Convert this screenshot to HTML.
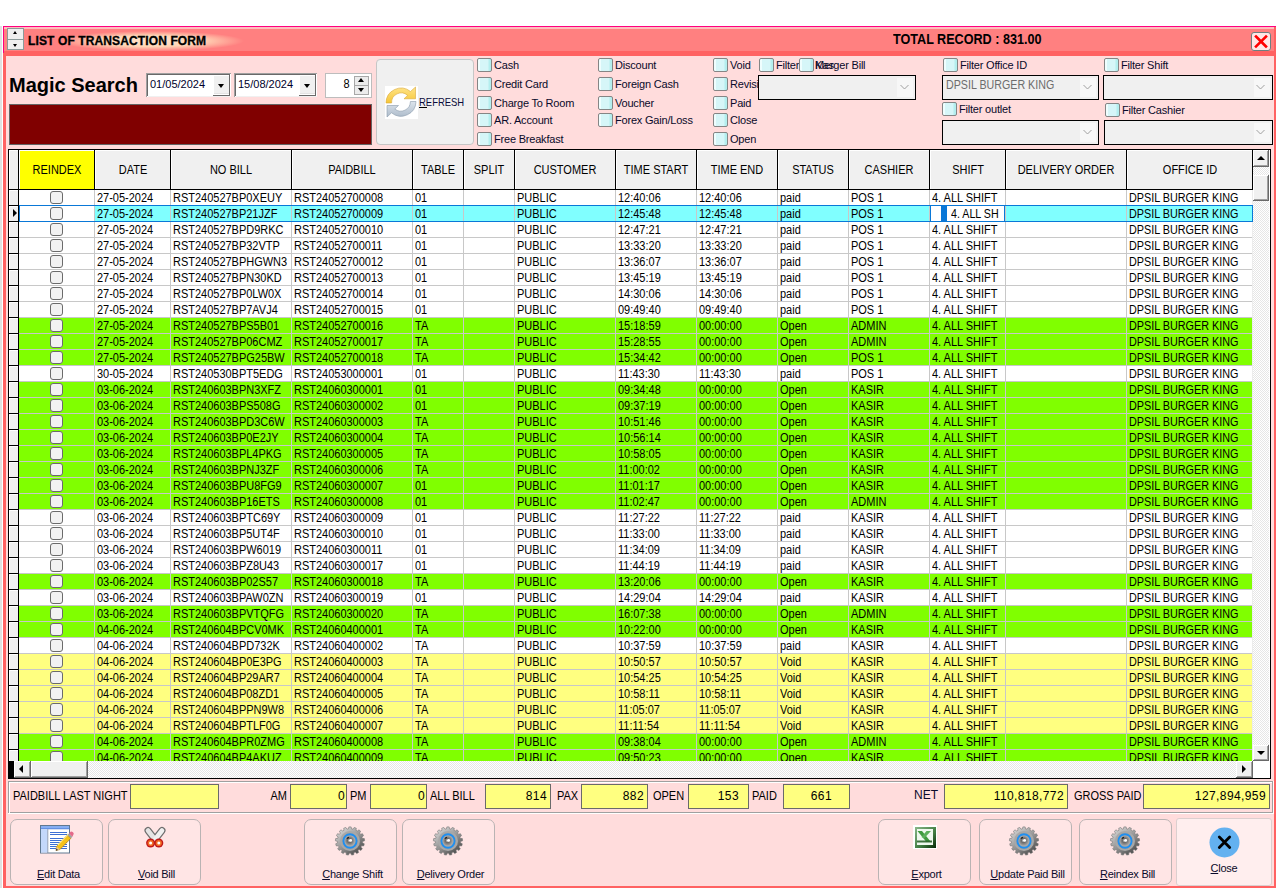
<!DOCTYPE html><html><head><meta charset="utf-8"><style>
html,body{margin:0;padding:0}
body{width:1279px;height:888px;position:relative;overflow:hidden;background:#fff;font-family:"Liberation Sans",sans-serif;color:#000}
.a{position:absolute}
.t{white-space:nowrap}
.g{white-space:nowrap;transform-origin:0 0}
.cb{position:absolute;width:13px;height:12px;border:1px solid #858585;border-radius:2px;background:linear-gradient(90deg,#effefe 0,#effefe 1.5px,#d6f6f8 2px,#d6f6f8 10px,#b4eeee 11px,#b4eeee 100%);box-sizing:content-box}
.fld{position:absolute;background:#ffff80;border:1px solid #6a6a6a;box-sizing:border-box}
.btn{position:absolute;top:819px;height:66px;width:93px;border:1px solid #b9b3b3;border-radius:7px;background:#ffe5e5;box-sizing:border-box}
.cmb{position:absolute;background:#f0f0f0;border:1px solid #000;box-sizing:border-box}
.cmb i{position:absolute;right:2px;top:2px;bottom:2px;width:16px;background:#f7f7f7}
.lbl{color:#0a0a2a}
</style></head><body>

<div class="a" style="left:0px;top:26px;width:2px;height:862px;background:#e1e1e1"></div>
<div class="a" style="left:3px;top:26px;width:1273px;height:862px;background:#ff6262"></div>
<div class="a" style="left:3px;top:26px;width:1273px;height:1px;background:#ff0080"></div>
<div class="a" style="left:3px;top:26px;width:1px;height:27px;background:#ff0080"></div>
<div class="a" style="left:4px;top:27px;width:1270px;height:24px;background:#ff8080"></div>
<div class="a" style="left:4px;top:27px;width:1270px;height:2px;background:#ffbcbc"></div>
<div class="a" style="left:6px;top:56px;width:1268px;height:830px;background:#ffdcdc"></div>
<div class="a" style="left:58px;top:31px;width:186px;height:20px;background:radial-gradient(closest-side,#ffe4cc 0%,#ffd6b6 55%,rgba(255,128,128,0) 100%)"></div>
<div class="a" style="left:7px;top:28px;width:17px;height:22px;background:#8c9a9a"></div>
<div class="a" style="left:8px;top:29px;width:15px;height:10px;background:#efefef"></div>
<div class="a" style="left:8px;top:40px;width:15px;height:9px;background:#efefef"></div>
<div class="a" style="left:13px;top:31px;width:0;height:0;border-left:2px solid transparent;border-right:2px solid transparent;border-bottom:3px solid #000"></div>
<div class="a" style="left:13px;top:44px;width:0;height:0;border-left:2px solid transparent;border-right:2px solid transparent;border-top:3px solid #000"></div>
<div class="a t" style="left:28px;top:34.84px;font-size:12px;line-height:12px;font-weight:bold;letter-spacing:0.12px;-webkit-text-stroke:0.3px #000">LIST OF TRANSACTION FORM</div>
<div class="a t" style="left:892.5px;top:32.15px;font-size:14px;line-height:14px;font-weight:bold;transform:scaleX(0.9);transform-origin:0 0">TOTAL RECORD : 831.00</div>
<div class="a" style="left:1251px;top:32px;width:20px;height:19px;box-sizing:border-box;border:1px solid #6f7f7f;border-radius:3px;background:#ffe6e6"></div>
<svg class="a" style="left:1251px;top:32px" width="20" height="19" viewBox="0 0 20 19"><path d="M5 4.5 L15 14.5 M15 4.5 L5 14.5" stroke="#ff0000" stroke-width="2.6" stroke-linecap="square"/></svg>
<div class="a t" style="left:9px;top:75.07px;font-size:20px;line-height:20px;font-weight:bold;letter-spacing:0px">Magic Search</div>
<div class="a" style="left:146px;top:73px;width:85px;height:24px;background:#a0a0a0"></div>
<div class="a" style="left:147px;top:74px;width:84px;height:23px;background:#fff"></div>
<div class="a" style="left:147px;top:74px;width:83px;height:1px;background:#696969"></div>
<div class="a" style="left:147px;top:74px;width:1px;height:22px;background:#696969"></div>
<div class="a" style="left:148px;top:96px;width:83px;height:1px;background:#f0f0f0"></div>
<div class="a t" style="left:150px;top:78.69px;font-size:11px;line-height:11px;color:#00002a">01/05/2024</div>
<div class="a" style="left:213px;top:75px;width:17px;height:21px;background:#696969"></div>
<div class="a" style="left:213px;top:75px;width:16px;height:20px;background:#fff"></div>
<div class="a" style="left:214px;top:76px;width:15px;height:18px;background:#f0f0f0"></div>
<div class="a" style="left:214px;top:93px;width:15px;height:1px;background:#e3e3e3"></div>
<div class="a" style="left:218px;top:84px;width:0;height:0;border-left:3.5px solid transparent;border-right:3.5px solid transparent;border-top:4px solid #000"></div>
<div class="a" style="left:234px;top:73px;width:83px;height:24px;background:#a0a0a0"></div>
<div class="a" style="left:235px;top:74px;width:82px;height:23px;background:#fff"></div>
<div class="a" style="left:235px;top:74px;width:81px;height:1px;background:#696969"></div>
<div class="a" style="left:235px;top:74px;width:1px;height:22px;background:#696969"></div>
<div class="a" style="left:236px;top:96px;width:81px;height:1px;background:#f0f0f0"></div>
<div class="a t" style="left:238px;top:78.69px;font-size:11px;line-height:11px;color:#00002a">15/08/2024</div>
<div class="a" style="left:299px;top:75px;width:17px;height:21px;background:#696969"></div>
<div class="a" style="left:299px;top:75px;width:16px;height:20px;background:#fff"></div>
<div class="a" style="left:300px;top:76px;width:15px;height:18px;background:#f0f0f0"></div>
<div class="a" style="left:300px;top:93px;width:15px;height:1px;background:#e3e3e3"></div>
<div class="a" style="left:304px;top:84px;width:0;height:0;border-left:3.5px solid transparent;border-right:3.5px solid transparent;border-top:4px solid #000"></div>
<div class="a" style="left:325px;top:73px;width:47px;height:25px;background:#bdbdbd"></div>
<div class="a" style="left:326px;top:74px;width:45px;height:23px;background:#fff"></div>
<div class="a g" style="right:929px;top:78.34px;font-size:12px;line-height:12px;transform:scaleX(0.915);transform-origin:100% 0;">8</div>
<div class="a" style="left:354px;top:76px;width:15px;height:19px;background:#a8a8a8"></div>
<div class="a" style="left:355px;top:77px;width:13px;height:8px;background:#ececec"></div>
<div class="a" style="left:355px;top:86px;width:13px;height:8px;background:#ececec"></div>
<div class="a" style="left:358px;top:78px;width:0;height:0;border-left:3px solid transparent;border-right:3px solid transparent;border-bottom:4px solid #000"></div>
<div class="a" style="left:358px;top:88px;width:0;height:0;border-left:3px solid transparent;border-right:3px solid transparent;border-top:4px solid #000"></div>
<div class="a" style="left:9px;top:104px;width:363px;height:41px;background:#646464"></div>
<div class="a" style="left:10px;top:105px;width:361px;height:39px;background:#800000"></div>
<div class="a" style="left:376px;top:59px;width:98px;height:86px;box-sizing:border-box;border:1px solid #c6c6c6;border-radius:4px;background:#f0f0f0"></div>
<div class="a" style="left:385px;top:86px;width:33px;height:33px;background:#fff"></div>
<svg class="a" style="left:385px;top:86px" width="32" height="32" viewBox="0 0 32 32">
<defs><linearGradient id="ry" x1="0" y1="0" x2="0" y2="1"><stop offset="0" stop-color="#ffe48a"/><stop offset="1" stop-color="#f6c636"/></linearGradient>
<linearGradient id="rb" x1="0" y1="0" x2="0" y2="1"><stop offset="0" stop-color="#dce4ec"/><stop offset="1" stop-color="#aebccb"/></linearGradient></defs>
<path d="M1 17 A15 15 0 0 1 25.5 5.5 L30.5 1 L30.5 12.8 L19 12.8 L22.6 9.4 A9.6 9.6 0 0 0 6.6 17 Z" fill="url(#ry)" stroke="#d9a83a" stroke-width="0.6"/>
<path d="M31 15.5 A15 15 0 0 1 6.5 26.8 L2 31 L2 19.5 L13.5 19.5 L9.8 23 A9.6 9.6 0 0 0 25.4 15.5 Z" fill="url(#rb)" stroke="#8a9aab" stroke-width="0.6"/>
</svg>
<div class="a g" style="left:418.5px;top:96.69px;font-size:11px;line-height:11px;transform:scaleX(0.86);color:#0a0a3a">REFRESH</div>
<div class="a" style="left:419px;top:107px;width:8px;height:1px;background:#000"></div>
<div class="cb" style="left:477px;top:58px"></div>
<div class="a t" style="left:494px;top:59.69px;font-size:11px;line-height:11px;color:#0a0a2a;letter-spacing:-0.2px">Cash</div>
<div class="cb" style="left:477px;top:77px"></div>
<div class="a t" style="left:494px;top:78.69px;font-size:11px;line-height:11px;color:#0a0a2a;letter-spacing:-0.2px">Credit Card</div>
<div class="cb" style="left:477px;top:96px"></div>
<div class="a t" style="left:494px;top:97.69px;font-size:11px;line-height:11px;color:#0a0a2a;letter-spacing:-0.2px">Charge To Room</div>
<div class="cb" style="left:477px;top:113px"></div>
<div class="a t" style="left:494px;top:114.69px;font-size:11px;line-height:11px;color:#0a0a2a;letter-spacing:-0.2px">AR. Account</div>
<div class="cb" style="left:477px;top:132px"></div>
<div class="a t" style="left:494px;top:133.69px;font-size:11px;line-height:11px;color:#0a0a2a;letter-spacing:-0.2px">Free Breakfast</div>
<div class="cb" style="left:598px;top:58px"></div>
<div class="a t" style="left:615px;top:59.69px;font-size:11px;line-height:11px;color:#0a0a2a;letter-spacing:-0.2px">Discount</div>
<div class="cb" style="left:598px;top:77px"></div>
<div class="a t" style="left:615px;top:78.69px;font-size:11px;line-height:11px;color:#0a0a2a;letter-spacing:-0.2px">Foreign Cash</div>
<div class="cb" style="left:598px;top:96px"></div>
<div class="a t" style="left:615px;top:97.69px;font-size:11px;line-height:11px;color:#0a0a2a;letter-spacing:-0.2px">Voucher</div>
<div class="cb" style="left:598px;top:113px"></div>
<div class="a t" style="left:615px;top:114.69px;font-size:11px;line-height:11px;color:#0a0a2a;letter-spacing:-0.2px">Forex Gain/Loss</div>
<div class="cb" style="left:713px;top:58px"></div>
<div class="a t" style="left:730px;top:59.69px;font-size:11px;line-height:11px;color:#0a0a2a;letter-spacing:-0.2px">Void</div>
<div class="cb" style="left:713px;top:77px"></div>
<div class="a t" style="left:730px;top:78.69px;font-size:11px;line-height:11px;color:#0a0a2a;letter-spacing:-0.2px;width:28px;overflow:hidden">Revisi</div>
<div class="cb" style="left:713px;top:96px"></div>
<div class="a t" style="left:730px;top:97.69px;font-size:11px;line-height:11px;color:#0a0a2a;letter-spacing:-0.2px">Paid</div>
<div class="cb" style="left:713px;top:113px"></div>
<div class="a t" style="left:730px;top:114.69px;font-size:11px;line-height:11px;color:#0a0a2a;letter-spacing:-0.2px">Close</div>
<div class="cb" style="left:713px;top:132px"></div>
<div class="a t" style="left:730px;top:133.69px;font-size:11px;line-height:11px;color:#0a0a2a;letter-spacing:-0.2px">Open</div>
<div class="cb" style="left:759px;top:58px"></div>
<div class="a t" style="left:776px;top:59.69px;font-size:11px;line-height:11px;color:#0a0a2a;letter-spacing:-0.2px">Filter</div>
<div class="a t" style="left:815px;top:59.69px;font-size:11px;line-height:11px;color:#0a0a2a">Kas</div>
<div class="cb" style="left:799px;top:58px"></div>
<div class="a t" style="left:815px;top:59.69px;font-size:11px;line-height:11px;color:#0a0a2a;letter-spacing:-0.2px">Merger Bill</div>
<div class="cmb" style="left:758px;top:75px;width:158px;height:25px"><i></i></div>
<svg class="a" style="left:900px;top:84px" width="10" height="6"><path d="M0.5 1 L4.5 5 L8.5 1" fill="none" stroke="#a0a0a0" stroke-width="1"/></svg>
<div class="cb" style="left:943px;top:58px"></div>
<div class="a t" style="left:960px;top:59.69px;font-size:11px;line-height:11px;color:#0a0a2a;letter-spacing:-0.2px">Filter Office ID</div>
<div class="cmb" style="left:942px;top:75px;width:157px;height:25px"><i></i></div>
<svg class="a" style="left:1083px;top:84px" width="10" height="6"><path d="M0.5 1 L4.5 5 L8.5 1" fill="none" stroke="#a0a0a0" stroke-width="1"/></svg>
<div class="a g" style="left:946px;top:78.84px;font-size:12px;line-height:12px;transform:scaleX(0.89);color:#6d6d6d">DPSIL BURGER KING</div>
<div class="cb" style="left:942px;top:102px"></div>
<div class="a t" style="left:959px;top:103.69px;font-size:11px;line-height:11px;color:#0a0a2a;letter-spacing:-0.2px">Filter outlet</div>
<div class="cmb" style="left:942px;top:120px;width:157px;height:25px"><i></i></div>
<svg class="a" style="left:1083px;top:129px" width="10" height="6"><path d="M0.5 1 L4.5 5 L8.5 1" fill="none" stroke="#a0a0a0" stroke-width="1"/></svg>
<div class="cb" style="left:1104px;top:58px"></div>
<div class="a t" style="left:1121px;top:59.69px;font-size:11px;line-height:11px;color:#0a0a2a;letter-spacing:-0.2px">Filter Shift</div>
<div class="cmb" style="left:1103px;top:75px;width:170px;height:25px"><i></i></div>
<svg class="a" style="left:1256px;top:84px" width="10" height="6"><path d="M0.5 1 L4.5 5 L8.5 1" fill="none" stroke="#a0a0a0" stroke-width="1"/></svg>
<div class="cb" style="left:1105px;top:103px"></div>
<div class="a t" style="left:1122px;top:104.69px;font-size:11px;line-height:11px;color:#0a0a2a;letter-spacing:-0.2px">Filter Cashier</div>
<div class="cmb" style="left:1104px;top:120px;width:169px;height:25px"><i></i></div>
<svg class="a" style="left:1256px;top:129px" width="10" height="6"><path d="M0.5 1 L4.5 5 L8.5 1" fill="none" stroke="#a0a0a0" stroke-width="1"/></svg>
<div class="a" style="left:8px;top:149px;width:1263px;height:630px;background:#000"></div>
<div class="a" style="left:9px;top:150px;width:1261px;height:628px;background:#fff"></div>
<div class="a" style="left:9px;top:150px;width:1243px;height:39px;background:#f0f0f0"></div>
<div class="a" style="left:19px;top:150px;width:75px;height:39px;background:#ffff00"></div>
<div class="a" style="left:9px;top:189px;width:1244px;height:1px;background:#000"></div>
<div class="a" style="left:18px;top:150px;width:1px;height:611px;background:#000"></div>
<div class="a" style="left:9px;top:150px;width:9px;height:1px;background:#fff"></div>
<div class="a" style="left:9px;top:150px;width:1px;height:39px;background:#fff"></div>
<div class="a" style="left:94px;top:150px;width:1px;height:39px;background:#000"></div>
<div class="a" style="left:170px;top:150px;width:1px;height:39px;background:#000"></div>
<div class="a" style="left:291px;top:150px;width:1px;height:39px;background:#000"></div>
<div class="a" style="left:412px;top:150px;width:1px;height:39px;background:#000"></div>
<div class="a" style="left:463px;top:150px;width:1px;height:39px;background:#000"></div>
<div class="a" style="left:514px;top:150px;width:1px;height:39px;background:#000"></div>
<div class="a" style="left:615px;top:150px;width:1px;height:39px;background:#000"></div>
<div class="a" style="left:696px;top:150px;width:1px;height:39px;background:#000"></div>
<div class="a" style="left:777px;top:150px;width:1px;height:39px;background:#000"></div>
<div class="a" style="left:848px;top:150px;width:1px;height:39px;background:#000"></div>
<div class="a" style="left:929px;top:150px;width:1px;height:39px;background:#000"></div>
<div class="a" style="left:1005px;top:150px;width:1px;height:39px;background:#000"></div>
<div class="a" style="left:1126px;top:150px;width:1px;height:39px;background:#000"></div>
<div class="a" style="left:1252px;top:150px;width:1px;height:39px;background:#000"></div>
<div class="a" style="left:19px;top:150px;width:75px;height:1px;background:#fff"></div>
<div class="a" style="left:19px;top:150px;width:1px;height:39px;background:#fff"></div>
<div class="a g" style="left:-143.5px;width:400px;text-align:center;top:163.84px;font-size:12px;line-height:12px;transform:scaleX(0.915);transform-origin:50% 0;">REINDEX</div>
<div class="a" style="left:95px;top:150px;width:75px;height:1px;background:#fff"></div>
<div class="a" style="left:95px;top:150px;width:1px;height:39px;background:#fff"></div>
<div class="a g" style="left:-67.5px;width:400px;text-align:center;top:163.84px;font-size:12px;line-height:12px;transform:scaleX(0.915);transform-origin:50% 0;">DATE</div>
<div class="a" style="left:171px;top:150px;width:120px;height:1px;background:#fff"></div>
<div class="a" style="left:171px;top:150px;width:1px;height:39px;background:#fff"></div>
<div class="a g" style="left:31.0px;width:400px;text-align:center;top:163.84px;font-size:12px;line-height:12px;transform:scaleX(0.915);transform-origin:50% 0;">NO BILL</div>
<div class="a" style="left:292px;top:150px;width:120px;height:1px;background:#fff"></div>
<div class="a" style="left:292px;top:150px;width:1px;height:39px;background:#fff"></div>
<div class="a g" style="left:152.0px;width:400px;text-align:center;top:163.84px;font-size:12px;line-height:12px;transform:scaleX(0.915);transform-origin:50% 0;">PAIDBILL</div>
<div class="a" style="left:413px;top:150px;width:50px;height:1px;background:#fff"></div>
<div class="a" style="left:413px;top:150px;width:1px;height:39px;background:#fff"></div>
<div class="a g" style="left:238.0px;width:400px;text-align:center;top:163.84px;font-size:12px;line-height:12px;transform:scaleX(0.915);transform-origin:50% 0;">TABLE</div>
<div class="a" style="left:464px;top:150px;width:50px;height:1px;background:#fff"></div>
<div class="a" style="left:464px;top:150px;width:1px;height:39px;background:#fff"></div>
<div class="a g" style="left:289.0px;width:400px;text-align:center;top:163.84px;font-size:12px;line-height:12px;transform:scaleX(0.915);transform-origin:50% 0;">SPLIT</div>
<div class="a" style="left:515px;top:150px;width:100px;height:1px;background:#fff"></div>
<div class="a" style="left:515px;top:150px;width:1px;height:39px;background:#fff"></div>
<div class="a g" style="left:365.0px;width:400px;text-align:center;top:163.84px;font-size:12px;line-height:12px;transform:scaleX(0.915);transform-origin:50% 0;">CUSTOMER</div>
<div class="a" style="left:616px;top:150px;width:80px;height:1px;background:#fff"></div>
<div class="a" style="left:616px;top:150px;width:1px;height:39px;background:#fff"></div>
<div class="a g" style="left:456.0px;width:400px;text-align:center;top:163.84px;font-size:12px;line-height:12px;transform:scaleX(0.915);transform-origin:50% 0;">TIME START</div>
<div class="a" style="left:697px;top:150px;width:80px;height:1px;background:#fff"></div>
<div class="a" style="left:697px;top:150px;width:1px;height:39px;background:#fff"></div>
<div class="a g" style="left:537.0px;width:400px;text-align:center;top:163.84px;font-size:12px;line-height:12px;transform:scaleX(0.915);transform-origin:50% 0;">TIME END</div>
<div class="a" style="left:778px;top:150px;width:70px;height:1px;background:#fff"></div>
<div class="a" style="left:778px;top:150px;width:1px;height:39px;background:#fff"></div>
<div class="a g" style="left:613.0px;width:400px;text-align:center;top:163.84px;font-size:12px;line-height:12px;transform:scaleX(0.915);transform-origin:50% 0;">STATUS</div>
<div class="a" style="left:849px;top:150px;width:80px;height:1px;background:#fff"></div>
<div class="a" style="left:849px;top:150px;width:1px;height:39px;background:#fff"></div>
<div class="a g" style="left:689.0px;width:400px;text-align:center;top:163.84px;font-size:12px;line-height:12px;transform:scaleX(0.915);transform-origin:50% 0;">CASHIER</div>
<div class="a" style="left:930px;top:150px;width:75px;height:1px;background:#fff"></div>
<div class="a" style="left:930px;top:150px;width:1px;height:39px;background:#fff"></div>
<div class="a g" style="left:767.5px;width:400px;text-align:center;top:163.84px;font-size:12px;line-height:12px;transform:scaleX(0.915);transform-origin:50% 0;">SHIFT</div>
<div class="a" style="left:1006px;top:150px;width:120px;height:1px;background:#fff"></div>
<div class="a" style="left:1006px;top:150px;width:1px;height:39px;background:#fff"></div>
<div class="a g" style="left:866.0px;width:400px;text-align:center;top:163.84px;font-size:12px;line-height:12px;transform:scaleX(0.915);transform-origin:50% 0;">DELIVERY ORDER</div>
<div class="a" style="left:1127px;top:150px;width:125px;height:1px;background:#fff"></div>
<div class="a" style="left:1127px;top:150px;width:1px;height:39px;background:#fff"></div>
<div class="a g" style="left:989.5px;width:400px;text-align:center;top:163.84px;font-size:12px;line-height:12px;transform:scaleX(0.915);transform-origin:50% 0;">OFFICE ID</div>
<div class="a" style="left:9px;top:190px;width:1244px;height:571px;overflow:hidden">
<div class="a" style="left:10px;top:0px;width:1234px;height:15px;background:#ffffff"></div>
<div class="a" style="left:0;top:0px;width:9px;height:15px;background:#f0f0f0;box-shadow:inset 1px 1px 0 #fff"></div>
<div class="a" style="left:0;top:15px;width:9px;height:1px;background:#000"></div>
<div class="a" style="left:10px;top:15px;width:1234px;height:1px;background:#c8c8c8"></div>
<div class="a" style="left:41px;top:1px;width:13px;height:13px;box-sizing:border-box;border:1px solid #6b6b6b;border-radius:3px;background:#f2f2f2"></div>
<div class="g" style="position:absolute;left:88px;top:1.84px;font-size:12px;line-height:12px;transform:scaleX(0.915)">27-05-2024</div>
<div class="g" style="position:absolute;left:164px;top:1.84px;font-size:12px;line-height:12px;transform:scaleX(0.915)">RST240527BP0XEUY</div>
<div class="g" style="position:absolute;left:285px;top:1.84px;font-size:12px;line-height:12px;transform:scaleX(0.915)">RST24052700008</div>
<div class="g" style="position:absolute;left:406px;top:1.84px;font-size:12px;line-height:12px;transform:scaleX(0.915)">01</div>
<div class="g" style="position:absolute;left:508px;top:1.84px;font-size:12px;line-height:12px;transform:scaleX(0.915)">PUBLIC</div>
<div class="g" style="position:absolute;left:609px;top:1.84px;font-size:12px;line-height:12px;transform:scaleX(0.915)">12:40:06</div>
<div class="g" style="position:absolute;left:690px;top:1.84px;font-size:12px;line-height:12px;transform:scaleX(0.915)">12:40:06</div>
<div class="g" style="position:absolute;left:771px;top:1.84px;font-size:12px;line-height:12px;transform:scaleX(0.915)">paid</div>
<div class="g" style="position:absolute;left:842px;top:1.84px;font-size:12px;line-height:12px;transform:scaleX(0.915)">POS 1</div>
<div class="g" style="position:absolute;left:923px;top:1.84px;font-size:12px;line-height:12px;transform:scaleX(0.915)">4. ALL SHIFT</div>
<div class="g" style="position:absolute;left:1120px;top:1.84px;font-size:12px;line-height:12px;transform:scaleX(0.9)">DPSIL BURGER KING</div>
<div class="a" style="left:10px;top:16px;width:1234px;height:15px;background:#80ffff"></div>
<div class="a" style="left:10px;top:16px;width:76px;height:15px;background:#fff"></div>
<div class="a" style="left:0;top:16px;width:9px;height:15px;background:#f0f0f0;box-shadow:inset 1px 1px 0 #fff"></div>
<div class="a" style="left:0;top:31px;width:9px;height:1px;background:#000"></div>
<div class="a" style="left:10px;top:31px;width:1234px;height:1px;background:#c8c8c8"></div>
<div class="a" style="left:41px;top:17px;width:13px;height:13px;box-sizing:border-box;border:1px solid #6b6b6b;border-radius:3px;background:#f2f2f2"></div>
<div class="g" style="position:absolute;left:88px;top:17.84px;font-size:12px;line-height:12px;transform:scaleX(0.915)">27-05-2024</div>
<div class="g" style="position:absolute;left:164px;top:17.84px;font-size:12px;line-height:12px;transform:scaleX(0.915)">RST240527BP21JZF</div>
<div class="g" style="position:absolute;left:285px;top:17.84px;font-size:12px;line-height:12px;transform:scaleX(0.915)">RST24052700009</div>
<div class="g" style="position:absolute;left:406px;top:17.84px;font-size:12px;line-height:12px;transform:scaleX(0.915)">01</div>
<div class="g" style="position:absolute;left:508px;top:17.84px;font-size:12px;line-height:12px;transform:scaleX(0.915)">PUBLIC</div>
<div class="g" style="position:absolute;left:609px;top:17.84px;font-size:12px;line-height:12px;transform:scaleX(0.915)">12:45:48</div>
<div class="g" style="position:absolute;left:690px;top:17.84px;font-size:12px;line-height:12px;transform:scaleX(0.915)">12:45:48</div>
<div class="g" style="position:absolute;left:771px;top:17.84px;font-size:12px;line-height:12px;transform:scaleX(0.915)">paid</div>
<div class="g" style="position:absolute;left:842px;top:17.84px;font-size:12px;line-height:12px;transform:scaleX(0.915)">POS 1</div>
<div class="g" style="position:absolute;left:923px;top:17.84px;font-size:12px;line-height:12px;transform:scaleX(0.915)">4. ALL SHIFT</div>
<div class="g" style="position:absolute;left:1120px;top:17.84px;font-size:12px;line-height:12px;transform:scaleX(0.9)">DPSIL BURGER KING</div>
<div class="a" style="left:10px;top:32px;width:1234px;height:15px;background:#ffffff"></div>
<div class="a" style="left:0;top:32px;width:9px;height:15px;background:#f0f0f0;box-shadow:inset 1px 1px 0 #fff"></div>
<div class="a" style="left:0;top:47px;width:9px;height:1px;background:#000"></div>
<div class="a" style="left:10px;top:47px;width:1234px;height:1px;background:#c8c8c8"></div>
<div class="a" style="left:41px;top:33px;width:13px;height:13px;box-sizing:border-box;border:1px solid #6b6b6b;border-radius:3px;background:#f2f2f2"></div>
<div class="g" style="position:absolute;left:88px;top:33.84px;font-size:12px;line-height:12px;transform:scaleX(0.915)">27-05-2024</div>
<div class="g" style="position:absolute;left:164px;top:33.84px;font-size:12px;line-height:12px;transform:scaleX(0.915)">RST240527BPD9RKC</div>
<div class="g" style="position:absolute;left:285px;top:33.84px;font-size:12px;line-height:12px;transform:scaleX(0.915)">RST24052700010</div>
<div class="g" style="position:absolute;left:406px;top:33.84px;font-size:12px;line-height:12px;transform:scaleX(0.915)">01</div>
<div class="g" style="position:absolute;left:508px;top:33.84px;font-size:12px;line-height:12px;transform:scaleX(0.915)">PUBLIC</div>
<div class="g" style="position:absolute;left:609px;top:33.84px;font-size:12px;line-height:12px;transform:scaleX(0.915)">12:47:21</div>
<div class="g" style="position:absolute;left:690px;top:33.84px;font-size:12px;line-height:12px;transform:scaleX(0.915)">12:47:21</div>
<div class="g" style="position:absolute;left:771px;top:33.84px;font-size:12px;line-height:12px;transform:scaleX(0.915)">paid</div>
<div class="g" style="position:absolute;left:842px;top:33.84px;font-size:12px;line-height:12px;transform:scaleX(0.915)">POS 1</div>
<div class="g" style="position:absolute;left:923px;top:33.84px;font-size:12px;line-height:12px;transform:scaleX(0.915)">4. ALL SHIFT</div>
<div class="g" style="position:absolute;left:1120px;top:33.84px;font-size:12px;line-height:12px;transform:scaleX(0.9)">DPSIL BURGER KING</div>
<div class="a" style="left:10px;top:48px;width:1234px;height:15px;background:#ffffff"></div>
<div class="a" style="left:0;top:48px;width:9px;height:15px;background:#f0f0f0;box-shadow:inset 1px 1px 0 #fff"></div>
<div class="a" style="left:0;top:63px;width:9px;height:1px;background:#000"></div>
<div class="a" style="left:10px;top:63px;width:1234px;height:1px;background:#c8c8c8"></div>
<div class="a" style="left:41px;top:49px;width:13px;height:13px;box-sizing:border-box;border:1px solid #6b6b6b;border-radius:3px;background:#f2f2f2"></div>
<div class="g" style="position:absolute;left:88px;top:49.84px;font-size:12px;line-height:12px;transform:scaleX(0.915)">27-05-2024</div>
<div class="g" style="position:absolute;left:164px;top:49.84px;font-size:12px;line-height:12px;transform:scaleX(0.915)">RST240527BP32VTP</div>
<div class="g" style="position:absolute;left:285px;top:49.84px;font-size:12px;line-height:12px;transform:scaleX(0.915)">RST24052700011</div>
<div class="g" style="position:absolute;left:406px;top:49.84px;font-size:12px;line-height:12px;transform:scaleX(0.915)">01</div>
<div class="g" style="position:absolute;left:508px;top:49.84px;font-size:12px;line-height:12px;transform:scaleX(0.915)">PUBLIC</div>
<div class="g" style="position:absolute;left:609px;top:49.84px;font-size:12px;line-height:12px;transform:scaleX(0.915)">13:33:20</div>
<div class="g" style="position:absolute;left:690px;top:49.84px;font-size:12px;line-height:12px;transform:scaleX(0.915)">13:33:20</div>
<div class="g" style="position:absolute;left:771px;top:49.84px;font-size:12px;line-height:12px;transform:scaleX(0.915)">paid</div>
<div class="g" style="position:absolute;left:842px;top:49.84px;font-size:12px;line-height:12px;transform:scaleX(0.915)">POS 1</div>
<div class="g" style="position:absolute;left:923px;top:49.84px;font-size:12px;line-height:12px;transform:scaleX(0.915)">4. ALL SHIFT</div>
<div class="g" style="position:absolute;left:1120px;top:49.84px;font-size:12px;line-height:12px;transform:scaleX(0.9)">DPSIL BURGER KING</div>
<div class="a" style="left:10px;top:64px;width:1234px;height:15px;background:#ffffff"></div>
<div class="a" style="left:0;top:64px;width:9px;height:15px;background:#f0f0f0;box-shadow:inset 1px 1px 0 #fff"></div>
<div class="a" style="left:0;top:79px;width:9px;height:1px;background:#000"></div>
<div class="a" style="left:10px;top:79px;width:1234px;height:1px;background:#c8c8c8"></div>
<div class="a" style="left:41px;top:65px;width:13px;height:13px;box-sizing:border-box;border:1px solid #6b6b6b;border-radius:3px;background:#f2f2f2"></div>
<div class="g" style="position:absolute;left:88px;top:65.84px;font-size:12px;line-height:12px;transform:scaleX(0.915)">27-05-2024</div>
<div class="g" style="position:absolute;left:164px;top:65.84px;font-size:12px;line-height:12px;transform:scaleX(0.915)">RST240527BPHGWN3</div>
<div class="g" style="position:absolute;left:285px;top:65.84px;font-size:12px;line-height:12px;transform:scaleX(0.915)">RST24052700012</div>
<div class="g" style="position:absolute;left:406px;top:65.84px;font-size:12px;line-height:12px;transform:scaleX(0.915)">01</div>
<div class="g" style="position:absolute;left:508px;top:65.84px;font-size:12px;line-height:12px;transform:scaleX(0.915)">PUBLIC</div>
<div class="g" style="position:absolute;left:609px;top:65.84px;font-size:12px;line-height:12px;transform:scaleX(0.915)">13:36:07</div>
<div class="g" style="position:absolute;left:690px;top:65.84px;font-size:12px;line-height:12px;transform:scaleX(0.915)">13:36:07</div>
<div class="g" style="position:absolute;left:771px;top:65.84px;font-size:12px;line-height:12px;transform:scaleX(0.915)">paid</div>
<div class="g" style="position:absolute;left:842px;top:65.84px;font-size:12px;line-height:12px;transform:scaleX(0.915)">POS 1</div>
<div class="g" style="position:absolute;left:923px;top:65.84px;font-size:12px;line-height:12px;transform:scaleX(0.915)">4. ALL SHIFT</div>
<div class="g" style="position:absolute;left:1120px;top:65.84px;font-size:12px;line-height:12px;transform:scaleX(0.9)">DPSIL BURGER KING</div>
<div class="a" style="left:10px;top:80px;width:1234px;height:15px;background:#ffffff"></div>
<div class="a" style="left:0;top:80px;width:9px;height:15px;background:#f0f0f0;box-shadow:inset 1px 1px 0 #fff"></div>
<div class="a" style="left:0;top:95px;width:9px;height:1px;background:#000"></div>
<div class="a" style="left:10px;top:95px;width:1234px;height:1px;background:#c8c8c8"></div>
<div class="a" style="left:41px;top:81px;width:13px;height:13px;box-sizing:border-box;border:1px solid #6b6b6b;border-radius:3px;background:#f2f2f2"></div>
<div class="g" style="position:absolute;left:88px;top:81.84px;font-size:12px;line-height:12px;transform:scaleX(0.915)">27-05-2024</div>
<div class="g" style="position:absolute;left:164px;top:81.84px;font-size:12px;line-height:12px;transform:scaleX(0.915)">RST240527BPN30KD</div>
<div class="g" style="position:absolute;left:285px;top:81.84px;font-size:12px;line-height:12px;transform:scaleX(0.915)">RST24052700013</div>
<div class="g" style="position:absolute;left:406px;top:81.84px;font-size:12px;line-height:12px;transform:scaleX(0.915)">01</div>
<div class="g" style="position:absolute;left:508px;top:81.84px;font-size:12px;line-height:12px;transform:scaleX(0.915)">PUBLIC</div>
<div class="g" style="position:absolute;left:609px;top:81.84px;font-size:12px;line-height:12px;transform:scaleX(0.915)">13:45:19</div>
<div class="g" style="position:absolute;left:690px;top:81.84px;font-size:12px;line-height:12px;transform:scaleX(0.915)">13:45:19</div>
<div class="g" style="position:absolute;left:771px;top:81.84px;font-size:12px;line-height:12px;transform:scaleX(0.915)">paid</div>
<div class="g" style="position:absolute;left:842px;top:81.84px;font-size:12px;line-height:12px;transform:scaleX(0.915)">POS 1</div>
<div class="g" style="position:absolute;left:923px;top:81.84px;font-size:12px;line-height:12px;transform:scaleX(0.915)">4. ALL SHIFT</div>
<div class="g" style="position:absolute;left:1120px;top:81.84px;font-size:12px;line-height:12px;transform:scaleX(0.9)">DPSIL BURGER KING</div>
<div class="a" style="left:10px;top:96px;width:1234px;height:15px;background:#ffffff"></div>
<div class="a" style="left:0;top:96px;width:9px;height:15px;background:#f0f0f0;box-shadow:inset 1px 1px 0 #fff"></div>
<div class="a" style="left:0;top:111px;width:9px;height:1px;background:#000"></div>
<div class="a" style="left:10px;top:111px;width:1234px;height:1px;background:#c8c8c8"></div>
<div class="a" style="left:41px;top:97px;width:13px;height:13px;box-sizing:border-box;border:1px solid #6b6b6b;border-radius:3px;background:#f2f2f2"></div>
<div class="g" style="position:absolute;left:88px;top:97.84px;font-size:12px;line-height:12px;transform:scaleX(0.915)">27-05-2024</div>
<div class="g" style="position:absolute;left:164px;top:97.84px;font-size:12px;line-height:12px;transform:scaleX(0.915)">RST240527BP0LW0X</div>
<div class="g" style="position:absolute;left:285px;top:97.84px;font-size:12px;line-height:12px;transform:scaleX(0.915)">RST24052700014</div>
<div class="g" style="position:absolute;left:406px;top:97.84px;font-size:12px;line-height:12px;transform:scaleX(0.915)">01</div>
<div class="g" style="position:absolute;left:508px;top:97.84px;font-size:12px;line-height:12px;transform:scaleX(0.915)">PUBLIC</div>
<div class="g" style="position:absolute;left:609px;top:97.84px;font-size:12px;line-height:12px;transform:scaleX(0.915)">14:30:06</div>
<div class="g" style="position:absolute;left:690px;top:97.84px;font-size:12px;line-height:12px;transform:scaleX(0.915)">14:30:06</div>
<div class="g" style="position:absolute;left:771px;top:97.84px;font-size:12px;line-height:12px;transform:scaleX(0.915)">paid</div>
<div class="g" style="position:absolute;left:842px;top:97.84px;font-size:12px;line-height:12px;transform:scaleX(0.915)">POS 1</div>
<div class="g" style="position:absolute;left:923px;top:97.84px;font-size:12px;line-height:12px;transform:scaleX(0.915)">4. ALL SHIFT</div>
<div class="g" style="position:absolute;left:1120px;top:97.84px;font-size:12px;line-height:12px;transform:scaleX(0.9)">DPSIL BURGER KING</div>
<div class="a" style="left:10px;top:112px;width:1234px;height:15px;background:#ffffff"></div>
<div class="a" style="left:0;top:112px;width:9px;height:15px;background:#f0f0f0;box-shadow:inset 1px 1px 0 #fff"></div>
<div class="a" style="left:0;top:127px;width:9px;height:1px;background:#000"></div>
<div class="a" style="left:10px;top:127px;width:1234px;height:1px;background:#c8c8c8"></div>
<div class="a" style="left:41px;top:113px;width:13px;height:13px;box-sizing:border-box;border:1px solid #6b6b6b;border-radius:3px;background:#f2f2f2"></div>
<div class="g" style="position:absolute;left:88px;top:113.84px;font-size:12px;line-height:12px;transform:scaleX(0.915)">27-05-2024</div>
<div class="g" style="position:absolute;left:164px;top:113.84px;font-size:12px;line-height:12px;transform:scaleX(0.915)">RST240527BP7AVJ4</div>
<div class="g" style="position:absolute;left:285px;top:113.84px;font-size:12px;line-height:12px;transform:scaleX(0.915)">RST24052700015</div>
<div class="g" style="position:absolute;left:406px;top:113.84px;font-size:12px;line-height:12px;transform:scaleX(0.915)">01</div>
<div class="g" style="position:absolute;left:508px;top:113.84px;font-size:12px;line-height:12px;transform:scaleX(0.915)">PUBLIC</div>
<div class="g" style="position:absolute;left:609px;top:113.84px;font-size:12px;line-height:12px;transform:scaleX(0.915)">09:49:40</div>
<div class="g" style="position:absolute;left:690px;top:113.84px;font-size:12px;line-height:12px;transform:scaleX(0.915)">09:49:40</div>
<div class="g" style="position:absolute;left:771px;top:113.84px;font-size:12px;line-height:12px;transform:scaleX(0.915)">paid</div>
<div class="g" style="position:absolute;left:842px;top:113.84px;font-size:12px;line-height:12px;transform:scaleX(0.915)">POS 1</div>
<div class="g" style="position:absolute;left:923px;top:113.84px;font-size:12px;line-height:12px;transform:scaleX(0.915)">4. ALL SHIFT</div>
<div class="g" style="position:absolute;left:1120px;top:113.84px;font-size:12px;line-height:12px;transform:scaleX(0.9)">DPSIL BURGER KING</div>
<div class="a" style="left:10px;top:128px;width:1234px;height:15px;background:#80ff00"></div>
<div class="a" style="left:0;top:128px;width:9px;height:15px;background:#f0f0f0;box-shadow:inset 1px 1px 0 #fff"></div>
<div class="a" style="left:0;top:143px;width:9px;height:1px;background:#000"></div>
<div class="a" style="left:10px;top:143px;width:1234px;height:1px;background:#c8c8c8"></div>
<div class="a" style="left:41px;top:129px;width:13px;height:13px;box-sizing:border-box;border:1px solid #6b6b6b;border-radius:3px;background:#f2f2f2"></div>
<div class="g" style="position:absolute;left:88px;top:129.84px;font-size:12px;line-height:12px;transform:scaleX(0.915)">27-05-2024</div>
<div class="g" style="position:absolute;left:164px;top:129.84px;font-size:12px;line-height:12px;transform:scaleX(0.915)">RST240527BPS5B01</div>
<div class="g" style="position:absolute;left:285px;top:129.84px;font-size:12px;line-height:12px;transform:scaleX(0.915)">RST24052700016</div>
<div class="g" style="position:absolute;left:406px;top:129.84px;font-size:12px;line-height:12px;transform:scaleX(0.915)">TA</div>
<div class="g" style="position:absolute;left:508px;top:129.84px;font-size:12px;line-height:12px;transform:scaleX(0.915)">PUBLIC</div>
<div class="g" style="position:absolute;left:609px;top:129.84px;font-size:12px;line-height:12px;transform:scaleX(0.915)">15:18:59</div>
<div class="g" style="position:absolute;left:690px;top:129.84px;font-size:12px;line-height:12px;transform:scaleX(0.915)">00:00:00</div>
<div class="g" style="position:absolute;left:771px;top:129.84px;font-size:12px;line-height:12px;transform:scaleX(0.915)">Open</div>
<div class="g" style="position:absolute;left:842px;top:129.84px;font-size:12px;line-height:12px;transform:scaleX(0.915)">ADMIN</div>
<div class="g" style="position:absolute;left:923px;top:129.84px;font-size:12px;line-height:12px;transform:scaleX(0.915)">4. ALL SHIFT</div>
<div class="g" style="position:absolute;left:1120px;top:129.84px;font-size:12px;line-height:12px;transform:scaleX(0.9)">DPSIL BURGER KING</div>
<div class="a" style="left:10px;top:144px;width:1234px;height:15px;background:#80ff00"></div>
<div class="a" style="left:0;top:144px;width:9px;height:15px;background:#f0f0f0;box-shadow:inset 1px 1px 0 #fff"></div>
<div class="a" style="left:0;top:159px;width:9px;height:1px;background:#000"></div>
<div class="a" style="left:10px;top:159px;width:1234px;height:1px;background:#c8c8c8"></div>
<div class="a" style="left:41px;top:145px;width:13px;height:13px;box-sizing:border-box;border:1px solid #6b6b6b;border-radius:3px;background:#f2f2f2"></div>
<div class="g" style="position:absolute;left:88px;top:145.84px;font-size:12px;line-height:12px;transform:scaleX(0.915)">27-05-2024</div>
<div class="g" style="position:absolute;left:164px;top:145.84px;font-size:12px;line-height:12px;transform:scaleX(0.915)">RST240527BP06CMZ</div>
<div class="g" style="position:absolute;left:285px;top:145.84px;font-size:12px;line-height:12px;transform:scaleX(0.915)">RST24052700017</div>
<div class="g" style="position:absolute;left:406px;top:145.84px;font-size:12px;line-height:12px;transform:scaleX(0.915)">TA</div>
<div class="g" style="position:absolute;left:508px;top:145.84px;font-size:12px;line-height:12px;transform:scaleX(0.915)">PUBLIC</div>
<div class="g" style="position:absolute;left:609px;top:145.84px;font-size:12px;line-height:12px;transform:scaleX(0.915)">15:28:55</div>
<div class="g" style="position:absolute;left:690px;top:145.84px;font-size:12px;line-height:12px;transform:scaleX(0.915)">00:00:00</div>
<div class="g" style="position:absolute;left:771px;top:145.84px;font-size:12px;line-height:12px;transform:scaleX(0.915)">Open</div>
<div class="g" style="position:absolute;left:842px;top:145.84px;font-size:12px;line-height:12px;transform:scaleX(0.915)">ADMIN</div>
<div class="g" style="position:absolute;left:923px;top:145.84px;font-size:12px;line-height:12px;transform:scaleX(0.915)">4. ALL SHIFT</div>
<div class="g" style="position:absolute;left:1120px;top:145.84px;font-size:12px;line-height:12px;transform:scaleX(0.9)">DPSIL BURGER KING</div>
<div class="a" style="left:10px;top:160px;width:1234px;height:15px;background:#80ff00"></div>
<div class="a" style="left:0;top:160px;width:9px;height:15px;background:#f0f0f0;box-shadow:inset 1px 1px 0 #fff"></div>
<div class="a" style="left:0;top:175px;width:9px;height:1px;background:#000"></div>
<div class="a" style="left:10px;top:175px;width:1234px;height:1px;background:#c8c8c8"></div>
<div class="a" style="left:41px;top:161px;width:13px;height:13px;box-sizing:border-box;border:1px solid #6b6b6b;border-radius:3px;background:#f2f2f2"></div>
<div class="g" style="position:absolute;left:88px;top:161.84px;font-size:12px;line-height:12px;transform:scaleX(0.915)">27-05-2024</div>
<div class="g" style="position:absolute;left:164px;top:161.84px;font-size:12px;line-height:12px;transform:scaleX(0.915)">RST240527BPG25BW</div>
<div class="g" style="position:absolute;left:285px;top:161.84px;font-size:12px;line-height:12px;transform:scaleX(0.915)">RST24052700018</div>
<div class="g" style="position:absolute;left:406px;top:161.84px;font-size:12px;line-height:12px;transform:scaleX(0.915)">TA</div>
<div class="g" style="position:absolute;left:508px;top:161.84px;font-size:12px;line-height:12px;transform:scaleX(0.915)">PUBLIC</div>
<div class="g" style="position:absolute;left:609px;top:161.84px;font-size:12px;line-height:12px;transform:scaleX(0.915)">15:34:42</div>
<div class="g" style="position:absolute;left:690px;top:161.84px;font-size:12px;line-height:12px;transform:scaleX(0.915)">00:00:00</div>
<div class="g" style="position:absolute;left:771px;top:161.84px;font-size:12px;line-height:12px;transform:scaleX(0.915)">Open</div>
<div class="g" style="position:absolute;left:842px;top:161.84px;font-size:12px;line-height:12px;transform:scaleX(0.915)">POS 1</div>
<div class="g" style="position:absolute;left:923px;top:161.84px;font-size:12px;line-height:12px;transform:scaleX(0.915)">4. ALL SHIFT</div>
<div class="g" style="position:absolute;left:1120px;top:161.84px;font-size:12px;line-height:12px;transform:scaleX(0.9)">DPSIL BURGER KING</div>
<div class="a" style="left:10px;top:176px;width:1234px;height:15px;background:#ffffff"></div>
<div class="a" style="left:0;top:176px;width:9px;height:15px;background:#f0f0f0;box-shadow:inset 1px 1px 0 #fff"></div>
<div class="a" style="left:0;top:191px;width:9px;height:1px;background:#000"></div>
<div class="a" style="left:10px;top:191px;width:1234px;height:1px;background:#c8c8c8"></div>
<div class="a" style="left:41px;top:177px;width:13px;height:13px;box-sizing:border-box;border:1px solid #6b6b6b;border-radius:3px;background:#f2f2f2"></div>
<div class="g" style="position:absolute;left:88px;top:177.84px;font-size:12px;line-height:12px;transform:scaleX(0.915)">30-05-2024</div>
<div class="g" style="position:absolute;left:164px;top:177.84px;font-size:12px;line-height:12px;transform:scaleX(0.915)">RST240530BPT5EDG</div>
<div class="g" style="position:absolute;left:285px;top:177.84px;font-size:12px;line-height:12px;transform:scaleX(0.915)">RST24053000001</div>
<div class="g" style="position:absolute;left:406px;top:177.84px;font-size:12px;line-height:12px;transform:scaleX(0.915)">01</div>
<div class="g" style="position:absolute;left:508px;top:177.84px;font-size:12px;line-height:12px;transform:scaleX(0.915)">PUBLIC</div>
<div class="g" style="position:absolute;left:609px;top:177.84px;font-size:12px;line-height:12px;transform:scaleX(0.915)">11:43:30</div>
<div class="g" style="position:absolute;left:690px;top:177.84px;font-size:12px;line-height:12px;transform:scaleX(0.915)">11:43:30</div>
<div class="g" style="position:absolute;left:771px;top:177.84px;font-size:12px;line-height:12px;transform:scaleX(0.915)">paid</div>
<div class="g" style="position:absolute;left:842px;top:177.84px;font-size:12px;line-height:12px;transform:scaleX(0.915)">POS 1</div>
<div class="g" style="position:absolute;left:923px;top:177.84px;font-size:12px;line-height:12px;transform:scaleX(0.915)">4. ALL SHIFT</div>
<div class="g" style="position:absolute;left:1120px;top:177.84px;font-size:12px;line-height:12px;transform:scaleX(0.9)">DPSIL BURGER KING</div>
<div class="a" style="left:10px;top:192px;width:1234px;height:15px;background:#80ff00"></div>
<div class="a" style="left:0;top:192px;width:9px;height:15px;background:#f0f0f0;box-shadow:inset 1px 1px 0 #fff"></div>
<div class="a" style="left:0;top:207px;width:9px;height:1px;background:#000"></div>
<div class="a" style="left:10px;top:207px;width:1234px;height:1px;background:#c8c8c8"></div>
<div class="a" style="left:41px;top:193px;width:13px;height:13px;box-sizing:border-box;border:1px solid #6b6b6b;border-radius:3px;background:#f2f2f2"></div>
<div class="g" style="position:absolute;left:88px;top:193.84px;font-size:12px;line-height:12px;transform:scaleX(0.915)">03-06-2024</div>
<div class="g" style="position:absolute;left:164px;top:193.84px;font-size:12px;line-height:12px;transform:scaleX(0.915)">RST240603BPN3XFZ</div>
<div class="g" style="position:absolute;left:285px;top:193.84px;font-size:12px;line-height:12px;transform:scaleX(0.915)">RST24060300001</div>
<div class="g" style="position:absolute;left:406px;top:193.84px;font-size:12px;line-height:12px;transform:scaleX(0.915)">01</div>
<div class="g" style="position:absolute;left:508px;top:193.84px;font-size:12px;line-height:12px;transform:scaleX(0.915)">PUBLIC</div>
<div class="g" style="position:absolute;left:609px;top:193.84px;font-size:12px;line-height:12px;transform:scaleX(0.915)">09:34:48</div>
<div class="g" style="position:absolute;left:690px;top:193.84px;font-size:12px;line-height:12px;transform:scaleX(0.915)">00:00:00</div>
<div class="g" style="position:absolute;left:771px;top:193.84px;font-size:12px;line-height:12px;transform:scaleX(0.915)">Open</div>
<div class="g" style="position:absolute;left:842px;top:193.84px;font-size:12px;line-height:12px;transform:scaleX(0.915)">KASIR</div>
<div class="g" style="position:absolute;left:923px;top:193.84px;font-size:12px;line-height:12px;transform:scaleX(0.915)">4. ALL SHIFT</div>
<div class="g" style="position:absolute;left:1120px;top:193.84px;font-size:12px;line-height:12px;transform:scaleX(0.9)">DPSIL BURGER KING</div>
<div class="a" style="left:10px;top:208px;width:1234px;height:15px;background:#80ff00"></div>
<div class="a" style="left:0;top:208px;width:9px;height:15px;background:#f0f0f0;box-shadow:inset 1px 1px 0 #fff"></div>
<div class="a" style="left:0;top:223px;width:9px;height:1px;background:#000"></div>
<div class="a" style="left:10px;top:223px;width:1234px;height:1px;background:#c8c8c8"></div>
<div class="a" style="left:41px;top:209px;width:13px;height:13px;box-sizing:border-box;border:1px solid #6b6b6b;border-radius:3px;background:#f2f2f2"></div>
<div class="g" style="position:absolute;left:88px;top:209.84px;font-size:12px;line-height:12px;transform:scaleX(0.915)">03-06-2024</div>
<div class="g" style="position:absolute;left:164px;top:209.84px;font-size:12px;line-height:12px;transform:scaleX(0.915)">RST240603BPS508G</div>
<div class="g" style="position:absolute;left:285px;top:209.84px;font-size:12px;line-height:12px;transform:scaleX(0.915)">RST24060300002</div>
<div class="g" style="position:absolute;left:406px;top:209.84px;font-size:12px;line-height:12px;transform:scaleX(0.915)">01</div>
<div class="g" style="position:absolute;left:508px;top:209.84px;font-size:12px;line-height:12px;transform:scaleX(0.915)">PUBLIC</div>
<div class="g" style="position:absolute;left:609px;top:209.84px;font-size:12px;line-height:12px;transform:scaleX(0.915)">09:37:19</div>
<div class="g" style="position:absolute;left:690px;top:209.84px;font-size:12px;line-height:12px;transform:scaleX(0.915)">00:00:00</div>
<div class="g" style="position:absolute;left:771px;top:209.84px;font-size:12px;line-height:12px;transform:scaleX(0.915)">Open</div>
<div class="g" style="position:absolute;left:842px;top:209.84px;font-size:12px;line-height:12px;transform:scaleX(0.915)">KASIR</div>
<div class="g" style="position:absolute;left:923px;top:209.84px;font-size:12px;line-height:12px;transform:scaleX(0.915)">4. ALL SHIFT</div>
<div class="g" style="position:absolute;left:1120px;top:209.84px;font-size:12px;line-height:12px;transform:scaleX(0.9)">DPSIL BURGER KING</div>
<div class="a" style="left:10px;top:224px;width:1234px;height:15px;background:#80ff00"></div>
<div class="a" style="left:0;top:224px;width:9px;height:15px;background:#f0f0f0;box-shadow:inset 1px 1px 0 #fff"></div>
<div class="a" style="left:0;top:239px;width:9px;height:1px;background:#000"></div>
<div class="a" style="left:10px;top:239px;width:1234px;height:1px;background:#c8c8c8"></div>
<div class="a" style="left:41px;top:225px;width:13px;height:13px;box-sizing:border-box;border:1px solid #6b6b6b;border-radius:3px;background:#f2f2f2"></div>
<div class="g" style="position:absolute;left:88px;top:225.84px;font-size:12px;line-height:12px;transform:scaleX(0.915)">03-06-2024</div>
<div class="g" style="position:absolute;left:164px;top:225.84px;font-size:12px;line-height:12px;transform:scaleX(0.915)">RST240603BPD3C6W</div>
<div class="g" style="position:absolute;left:285px;top:225.84px;font-size:12px;line-height:12px;transform:scaleX(0.915)">RST24060300003</div>
<div class="g" style="position:absolute;left:406px;top:225.84px;font-size:12px;line-height:12px;transform:scaleX(0.915)">TA</div>
<div class="g" style="position:absolute;left:508px;top:225.84px;font-size:12px;line-height:12px;transform:scaleX(0.915)">PUBLIC</div>
<div class="g" style="position:absolute;left:609px;top:225.84px;font-size:12px;line-height:12px;transform:scaleX(0.915)">10:51:46</div>
<div class="g" style="position:absolute;left:690px;top:225.84px;font-size:12px;line-height:12px;transform:scaleX(0.915)">00:00:00</div>
<div class="g" style="position:absolute;left:771px;top:225.84px;font-size:12px;line-height:12px;transform:scaleX(0.915)">Open</div>
<div class="g" style="position:absolute;left:842px;top:225.84px;font-size:12px;line-height:12px;transform:scaleX(0.915)">KASIR</div>
<div class="g" style="position:absolute;left:923px;top:225.84px;font-size:12px;line-height:12px;transform:scaleX(0.915)">4. ALL SHIFT</div>
<div class="g" style="position:absolute;left:1120px;top:225.84px;font-size:12px;line-height:12px;transform:scaleX(0.9)">DPSIL BURGER KING</div>
<div class="a" style="left:10px;top:240px;width:1234px;height:15px;background:#80ff00"></div>
<div class="a" style="left:0;top:240px;width:9px;height:15px;background:#f0f0f0;box-shadow:inset 1px 1px 0 #fff"></div>
<div class="a" style="left:0;top:255px;width:9px;height:1px;background:#000"></div>
<div class="a" style="left:10px;top:255px;width:1234px;height:1px;background:#c8c8c8"></div>
<div class="a" style="left:41px;top:241px;width:13px;height:13px;box-sizing:border-box;border:1px solid #6b6b6b;border-radius:3px;background:#f2f2f2"></div>
<div class="g" style="position:absolute;left:88px;top:241.84px;font-size:12px;line-height:12px;transform:scaleX(0.915)">03-06-2024</div>
<div class="g" style="position:absolute;left:164px;top:241.84px;font-size:12px;line-height:12px;transform:scaleX(0.915)">RST240603BP0E2JY</div>
<div class="g" style="position:absolute;left:285px;top:241.84px;font-size:12px;line-height:12px;transform:scaleX(0.915)">RST24060300004</div>
<div class="g" style="position:absolute;left:406px;top:241.84px;font-size:12px;line-height:12px;transform:scaleX(0.915)">TA</div>
<div class="g" style="position:absolute;left:508px;top:241.84px;font-size:12px;line-height:12px;transform:scaleX(0.915)">PUBLIC</div>
<div class="g" style="position:absolute;left:609px;top:241.84px;font-size:12px;line-height:12px;transform:scaleX(0.915)">10:56:14</div>
<div class="g" style="position:absolute;left:690px;top:241.84px;font-size:12px;line-height:12px;transform:scaleX(0.915)">00:00:00</div>
<div class="g" style="position:absolute;left:771px;top:241.84px;font-size:12px;line-height:12px;transform:scaleX(0.915)">Open</div>
<div class="g" style="position:absolute;left:842px;top:241.84px;font-size:12px;line-height:12px;transform:scaleX(0.915)">KASIR</div>
<div class="g" style="position:absolute;left:923px;top:241.84px;font-size:12px;line-height:12px;transform:scaleX(0.915)">4. ALL SHIFT</div>
<div class="g" style="position:absolute;left:1120px;top:241.84px;font-size:12px;line-height:12px;transform:scaleX(0.9)">DPSIL BURGER KING</div>
<div class="a" style="left:10px;top:256px;width:1234px;height:15px;background:#80ff00"></div>
<div class="a" style="left:0;top:256px;width:9px;height:15px;background:#f0f0f0;box-shadow:inset 1px 1px 0 #fff"></div>
<div class="a" style="left:0;top:271px;width:9px;height:1px;background:#000"></div>
<div class="a" style="left:10px;top:271px;width:1234px;height:1px;background:#c8c8c8"></div>
<div class="a" style="left:41px;top:257px;width:13px;height:13px;box-sizing:border-box;border:1px solid #6b6b6b;border-radius:3px;background:#f2f2f2"></div>
<div class="g" style="position:absolute;left:88px;top:257.84px;font-size:12px;line-height:12px;transform:scaleX(0.915)">03-06-2024</div>
<div class="g" style="position:absolute;left:164px;top:257.84px;font-size:12px;line-height:12px;transform:scaleX(0.915)">RST240603BPL4PKG</div>
<div class="g" style="position:absolute;left:285px;top:257.84px;font-size:12px;line-height:12px;transform:scaleX(0.915)">RST24060300005</div>
<div class="g" style="position:absolute;left:406px;top:257.84px;font-size:12px;line-height:12px;transform:scaleX(0.915)">TA</div>
<div class="g" style="position:absolute;left:508px;top:257.84px;font-size:12px;line-height:12px;transform:scaleX(0.915)">PUBLIC</div>
<div class="g" style="position:absolute;left:609px;top:257.84px;font-size:12px;line-height:12px;transform:scaleX(0.915)">10:58:05</div>
<div class="g" style="position:absolute;left:690px;top:257.84px;font-size:12px;line-height:12px;transform:scaleX(0.915)">00:00:00</div>
<div class="g" style="position:absolute;left:771px;top:257.84px;font-size:12px;line-height:12px;transform:scaleX(0.915)">Open</div>
<div class="g" style="position:absolute;left:842px;top:257.84px;font-size:12px;line-height:12px;transform:scaleX(0.915)">KASIR</div>
<div class="g" style="position:absolute;left:923px;top:257.84px;font-size:12px;line-height:12px;transform:scaleX(0.915)">4. ALL SHIFT</div>
<div class="g" style="position:absolute;left:1120px;top:257.84px;font-size:12px;line-height:12px;transform:scaleX(0.9)">DPSIL BURGER KING</div>
<div class="a" style="left:10px;top:272px;width:1234px;height:15px;background:#80ff00"></div>
<div class="a" style="left:0;top:272px;width:9px;height:15px;background:#f0f0f0;box-shadow:inset 1px 1px 0 #fff"></div>
<div class="a" style="left:0;top:287px;width:9px;height:1px;background:#000"></div>
<div class="a" style="left:10px;top:287px;width:1234px;height:1px;background:#c8c8c8"></div>
<div class="a" style="left:41px;top:273px;width:13px;height:13px;box-sizing:border-box;border:1px solid #6b6b6b;border-radius:3px;background:#f2f2f2"></div>
<div class="g" style="position:absolute;left:88px;top:273.84px;font-size:12px;line-height:12px;transform:scaleX(0.915)">03-06-2024</div>
<div class="g" style="position:absolute;left:164px;top:273.84px;font-size:12px;line-height:12px;transform:scaleX(0.915)">RST240603BPNJ3ZF</div>
<div class="g" style="position:absolute;left:285px;top:273.84px;font-size:12px;line-height:12px;transform:scaleX(0.915)">RST24060300006</div>
<div class="g" style="position:absolute;left:406px;top:273.84px;font-size:12px;line-height:12px;transform:scaleX(0.915)">TA</div>
<div class="g" style="position:absolute;left:508px;top:273.84px;font-size:12px;line-height:12px;transform:scaleX(0.915)">PUBLIC</div>
<div class="g" style="position:absolute;left:609px;top:273.84px;font-size:12px;line-height:12px;transform:scaleX(0.915)">11:00:02</div>
<div class="g" style="position:absolute;left:690px;top:273.84px;font-size:12px;line-height:12px;transform:scaleX(0.915)">00:00:00</div>
<div class="g" style="position:absolute;left:771px;top:273.84px;font-size:12px;line-height:12px;transform:scaleX(0.915)">Open</div>
<div class="g" style="position:absolute;left:842px;top:273.84px;font-size:12px;line-height:12px;transform:scaleX(0.915)">KASIR</div>
<div class="g" style="position:absolute;left:923px;top:273.84px;font-size:12px;line-height:12px;transform:scaleX(0.915)">4. ALL SHIFT</div>
<div class="g" style="position:absolute;left:1120px;top:273.84px;font-size:12px;line-height:12px;transform:scaleX(0.9)">DPSIL BURGER KING</div>
<div class="a" style="left:10px;top:288px;width:1234px;height:15px;background:#80ff00"></div>
<div class="a" style="left:0;top:288px;width:9px;height:15px;background:#f0f0f0;box-shadow:inset 1px 1px 0 #fff"></div>
<div class="a" style="left:0;top:303px;width:9px;height:1px;background:#000"></div>
<div class="a" style="left:10px;top:303px;width:1234px;height:1px;background:#c8c8c8"></div>
<div class="a" style="left:41px;top:289px;width:13px;height:13px;box-sizing:border-box;border:1px solid #6b6b6b;border-radius:3px;background:#f2f2f2"></div>
<div class="g" style="position:absolute;left:88px;top:289.84px;font-size:12px;line-height:12px;transform:scaleX(0.915)">03-06-2024</div>
<div class="g" style="position:absolute;left:164px;top:289.84px;font-size:12px;line-height:12px;transform:scaleX(0.915)">RST240603BPU8FG9</div>
<div class="g" style="position:absolute;left:285px;top:289.84px;font-size:12px;line-height:12px;transform:scaleX(0.915)">RST24060300007</div>
<div class="g" style="position:absolute;left:406px;top:289.84px;font-size:12px;line-height:12px;transform:scaleX(0.915)">01</div>
<div class="g" style="position:absolute;left:508px;top:289.84px;font-size:12px;line-height:12px;transform:scaleX(0.915)">PUBLIC</div>
<div class="g" style="position:absolute;left:609px;top:289.84px;font-size:12px;line-height:12px;transform:scaleX(0.915)">11:01:17</div>
<div class="g" style="position:absolute;left:690px;top:289.84px;font-size:12px;line-height:12px;transform:scaleX(0.915)">00:00:00</div>
<div class="g" style="position:absolute;left:771px;top:289.84px;font-size:12px;line-height:12px;transform:scaleX(0.915)">Open</div>
<div class="g" style="position:absolute;left:842px;top:289.84px;font-size:12px;line-height:12px;transform:scaleX(0.915)">KASIR</div>
<div class="g" style="position:absolute;left:923px;top:289.84px;font-size:12px;line-height:12px;transform:scaleX(0.915)">4. ALL SHIFT</div>
<div class="g" style="position:absolute;left:1120px;top:289.84px;font-size:12px;line-height:12px;transform:scaleX(0.9)">DPSIL BURGER KING</div>
<div class="a" style="left:10px;top:304px;width:1234px;height:15px;background:#80ff00"></div>
<div class="a" style="left:0;top:304px;width:9px;height:15px;background:#f0f0f0;box-shadow:inset 1px 1px 0 #fff"></div>
<div class="a" style="left:0;top:319px;width:9px;height:1px;background:#000"></div>
<div class="a" style="left:10px;top:319px;width:1234px;height:1px;background:#c8c8c8"></div>
<div class="a" style="left:41px;top:305px;width:13px;height:13px;box-sizing:border-box;border:1px solid #6b6b6b;border-radius:3px;background:#f2f2f2"></div>
<div class="g" style="position:absolute;left:88px;top:305.84px;font-size:12px;line-height:12px;transform:scaleX(0.915)">03-06-2024</div>
<div class="g" style="position:absolute;left:164px;top:305.84px;font-size:12px;line-height:12px;transform:scaleX(0.915)">RST240603BP16ETS</div>
<div class="g" style="position:absolute;left:285px;top:305.84px;font-size:12px;line-height:12px;transform:scaleX(0.915)">RST24060300008</div>
<div class="g" style="position:absolute;left:406px;top:305.84px;font-size:12px;line-height:12px;transform:scaleX(0.915)">01</div>
<div class="g" style="position:absolute;left:508px;top:305.84px;font-size:12px;line-height:12px;transform:scaleX(0.915)">PUBLIC</div>
<div class="g" style="position:absolute;left:609px;top:305.84px;font-size:12px;line-height:12px;transform:scaleX(0.915)">11:02:47</div>
<div class="g" style="position:absolute;left:690px;top:305.84px;font-size:12px;line-height:12px;transform:scaleX(0.915)">00:00:00</div>
<div class="g" style="position:absolute;left:771px;top:305.84px;font-size:12px;line-height:12px;transform:scaleX(0.915)">Open</div>
<div class="g" style="position:absolute;left:842px;top:305.84px;font-size:12px;line-height:12px;transform:scaleX(0.915)">ADMIN</div>
<div class="g" style="position:absolute;left:923px;top:305.84px;font-size:12px;line-height:12px;transform:scaleX(0.915)">4. ALL SHIFT</div>
<div class="g" style="position:absolute;left:1120px;top:305.84px;font-size:12px;line-height:12px;transform:scaleX(0.9)">DPSIL BURGER KING</div>
<div class="a" style="left:10px;top:320px;width:1234px;height:15px;background:#ffffff"></div>
<div class="a" style="left:0;top:320px;width:9px;height:15px;background:#f0f0f0;box-shadow:inset 1px 1px 0 #fff"></div>
<div class="a" style="left:0;top:335px;width:9px;height:1px;background:#000"></div>
<div class="a" style="left:10px;top:335px;width:1234px;height:1px;background:#c8c8c8"></div>
<div class="a" style="left:41px;top:321px;width:13px;height:13px;box-sizing:border-box;border:1px solid #6b6b6b;border-radius:3px;background:#f2f2f2"></div>
<div class="g" style="position:absolute;left:88px;top:321.84px;font-size:12px;line-height:12px;transform:scaleX(0.915)">03-06-2024</div>
<div class="g" style="position:absolute;left:164px;top:321.84px;font-size:12px;line-height:12px;transform:scaleX(0.915)">RST240603BPTC69Y</div>
<div class="g" style="position:absolute;left:285px;top:321.84px;font-size:12px;line-height:12px;transform:scaleX(0.915)">RST24060300009</div>
<div class="g" style="position:absolute;left:406px;top:321.84px;font-size:12px;line-height:12px;transform:scaleX(0.915)">01</div>
<div class="g" style="position:absolute;left:508px;top:321.84px;font-size:12px;line-height:12px;transform:scaleX(0.915)">PUBLIC</div>
<div class="g" style="position:absolute;left:609px;top:321.84px;font-size:12px;line-height:12px;transform:scaleX(0.915)">11:27:22</div>
<div class="g" style="position:absolute;left:690px;top:321.84px;font-size:12px;line-height:12px;transform:scaleX(0.915)">11:27:22</div>
<div class="g" style="position:absolute;left:771px;top:321.84px;font-size:12px;line-height:12px;transform:scaleX(0.915)">paid</div>
<div class="g" style="position:absolute;left:842px;top:321.84px;font-size:12px;line-height:12px;transform:scaleX(0.915)">KASIR</div>
<div class="g" style="position:absolute;left:923px;top:321.84px;font-size:12px;line-height:12px;transform:scaleX(0.915)">4. ALL SHIFT</div>
<div class="g" style="position:absolute;left:1120px;top:321.84px;font-size:12px;line-height:12px;transform:scaleX(0.9)">DPSIL BURGER KING</div>
<div class="a" style="left:10px;top:336px;width:1234px;height:15px;background:#ffffff"></div>
<div class="a" style="left:0;top:336px;width:9px;height:15px;background:#f0f0f0;box-shadow:inset 1px 1px 0 #fff"></div>
<div class="a" style="left:0;top:351px;width:9px;height:1px;background:#000"></div>
<div class="a" style="left:10px;top:351px;width:1234px;height:1px;background:#c8c8c8"></div>
<div class="a" style="left:41px;top:337px;width:13px;height:13px;box-sizing:border-box;border:1px solid #6b6b6b;border-radius:3px;background:#f2f2f2"></div>
<div class="g" style="position:absolute;left:88px;top:337.84px;font-size:12px;line-height:12px;transform:scaleX(0.915)">03-06-2024</div>
<div class="g" style="position:absolute;left:164px;top:337.84px;font-size:12px;line-height:12px;transform:scaleX(0.915)">RST240603BP5UT4F</div>
<div class="g" style="position:absolute;left:285px;top:337.84px;font-size:12px;line-height:12px;transform:scaleX(0.915)">RST24060300010</div>
<div class="g" style="position:absolute;left:406px;top:337.84px;font-size:12px;line-height:12px;transform:scaleX(0.915)">01</div>
<div class="g" style="position:absolute;left:508px;top:337.84px;font-size:12px;line-height:12px;transform:scaleX(0.915)">PUBLIC</div>
<div class="g" style="position:absolute;left:609px;top:337.84px;font-size:12px;line-height:12px;transform:scaleX(0.915)">11:33:00</div>
<div class="g" style="position:absolute;left:690px;top:337.84px;font-size:12px;line-height:12px;transform:scaleX(0.915)">11:33:00</div>
<div class="g" style="position:absolute;left:771px;top:337.84px;font-size:12px;line-height:12px;transform:scaleX(0.915)">paid</div>
<div class="g" style="position:absolute;left:842px;top:337.84px;font-size:12px;line-height:12px;transform:scaleX(0.915)">KASIR</div>
<div class="g" style="position:absolute;left:923px;top:337.84px;font-size:12px;line-height:12px;transform:scaleX(0.915)">4. ALL SHIFT</div>
<div class="g" style="position:absolute;left:1120px;top:337.84px;font-size:12px;line-height:12px;transform:scaleX(0.9)">DPSIL BURGER KING</div>
<div class="a" style="left:10px;top:352px;width:1234px;height:15px;background:#ffffff"></div>
<div class="a" style="left:0;top:352px;width:9px;height:15px;background:#f0f0f0;box-shadow:inset 1px 1px 0 #fff"></div>
<div class="a" style="left:0;top:367px;width:9px;height:1px;background:#000"></div>
<div class="a" style="left:10px;top:367px;width:1234px;height:1px;background:#c8c8c8"></div>
<div class="a" style="left:41px;top:353px;width:13px;height:13px;box-sizing:border-box;border:1px solid #6b6b6b;border-radius:3px;background:#f2f2f2"></div>
<div class="g" style="position:absolute;left:88px;top:353.84px;font-size:12px;line-height:12px;transform:scaleX(0.915)">03-06-2024</div>
<div class="g" style="position:absolute;left:164px;top:353.84px;font-size:12px;line-height:12px;transform:scaleX(0.915)">RST240603BPW6019</div>
<div class="g" style="position:absolute;left:285px;top:353.84px;font-size:12px;line-height:12px;transform:scaleX(0.915)">RST24060300011</div>
<div class="g" style="position:absolute;left:406px;top:353.84px;font-size:12px;line-height:12px;transform:scaleX(0.915)">01</div>
<div class="g" style="position:absolute;left:508px;top:353.84px;font-size:12px;line-height:12px;transform:scaleX(0.915)">PUBLIC</div>
<div class="g" style="position:absolute;left:609px;top:353.84px;font-size:12px;line-height:12px;transform:scaleX(0.915)">11:34:09</div>
<div class="g" style="position:absolute;left:690px;top:353.84px;font-size:12px;line-height:12px;transform:scaleX(0.915)">11:34:09</div>
<div class="g" style="position:absolute;left:771px;top:353.84px;font-size:12px;line-height:12px;transform:scaleX(0.915)">paid</div>
<div class="g" style="position:absolute;left:842px;top:353.84px;font-size:12px;line-height:12px;transform:scaleX(0.915)">KASIR</div>
<div class="g" style="position:absolute;left:923px;top:353.84px;font-size:12px;line-height:12px;transform:scaleX(0.915)">4. ALL SHIFT</div>
<div class="g" style="position:absolute;left:1120px;top:353.84px;font-size:12px;line-height:12px;transform:scaleX(0.9)">DPSIL BURGER KING</div>
<div class="a" style="left:10px;top:368px;width:1234px;height:15px;background:#ffffff"></div>
<div class="a" style="left:0;top:368px;width:9px;height:15px;background:#f0f0f0;box-shadow:inset 1px 1px 0 #fff"></div>
<div class="a" style="left:0;top:383px;width:9px;height:1px;background:#000"></div>
<div class="a" style="left:10px;top:383px;width:1234px;height:1px;background:#c8c8c8"></div>
<div class="a" style="left:41px;top:369px;width:13px;height:13px;box-sizing:border-box;border:1px solid #6b6b6b;border-radius:3px;background:#f2f2f2"></div>
<div class="g" style="position:absolute;left:88px;top:369.84px;font-size:12px;line-height:12px;transform:scaleX(0.915)">03-06-2024</div>
<div class="g" style="position:absolute;left:164px;top:369.84px;font-size:12px;line-height:12px;transform:scaleX(0.915)">RST240603BPZ8U43</div>
<div class="g" style="position:absolute;left:285px;top:369.84px;font-size:12px;line-height:12px;transform:scaleX(0.915)">RST24060300017</div>
<div class="g" style="position:absolute;left:406px;top:369.84px;font-size:12px;line-height:12px;transform:scaleX(0.915)">01</div>
<div class="g" style="position:absolute;left:508px;top:369.84px;font-size:12px;line-height:12px;transform:scaleX(0.915)">PUBLIC</div>
<div class="g" style="position:absolute;left:609px;top:369.84px;font-size:12px;line-height:12px;transform:scaleX(0.915)">11:44:19</div>
<div class="g" style="position:absolute;left:690px;top:369.84px;font-size:12px;line-height:12px;transform:scaleX(0.915)">11:44:19</div>
<div class="g" style="position:absolute;left:771px;top:369.84px;font-size:12px;line-height:12px;transform:scaleX(0.915)">paid</div>
<div class="g" style="position:absolute;left:842px;top:369.84px;font-size:12px;line-height:12px;transform:scaleX(0.915)">KASIR</div>
<div class="g" style="position:absolute;left:923px;top:369.84px;font-size:12px;line-height:12px;transform:scaleX(0.915)">4. ALL SHIFT</div>
<div class="g" style="position:absolute;left:1120px;top:369.84px;font-size:12px;line-height:12px;transform:scaleX(0.9)">DPSIL BURGER KING</div>
<div class="a" style="left:10px;top:384px;width:1234px;height:15px;background:#80ff00"></div>
<div class="a" style="left:0;top:384px;width:9px;height:15px;background:#f0f0f0;box-shadow:inset 1px 1px 0 #fff"></div>
<div class="a" style="left:0;top:399px;width:9px;height:1px;background:#000"></div>
<div class="a" style="left:10px;top:399px;width:1234px;height:1px;background:#c8c8c8"></div>
<div class="a" style="left:41px;top:385px;width:13px;height:13px;box-sizing:border-box;border:1px solid #6b6b6b;border-radius:3px;background:#f2f2f2"></div>
<div class="g" style="position:absolute;left:88px;top:385.84px;font-size:12px;line-height:12px;transform:scaleX(0.915)">03-06-2024</div>
<div class="g" style="position:absolute;left:164px;top:385.84px;font-size:12px;line-height:12px;transform:scaleX(0.915)">RST240603BP02S57</div>
<div class="g" style="position:absolute;left:285px;top:385.84px;font-size:12px;line-height:12px;transform:scaleX(0.915)">RST24060300018</div>
<div class="g" style="position:absolute;left:406px;top:385.84px;font-size:12px;line-height:12px;transform:scaleX(0.915)">TA</div>
<div class="g" style="position:absolute;left:508px;top:385.84px;font-size:12px;line-height:12px;transform:scaleX(0.915)">PUBLIC</div>
<div class="g" style="position:absolute;left:609px;top:385.84px;font-size:12px;line-height:12px;transform:scaleX(0.915)">13:20:06</div>
<div class="g" style="position:absolute;left:690px;top:385.84px;font-size:12px;line-height:12px;transform:scaleX(0.915)">00:00:00</div>
<div class="g" style="position:absolute;left:771px;top:385.84px;font-size:12px;line-height:12px;transform:scaleX(0.915)">Open</div>
<div class="g" style="position:absolute;left:842px;top:385.84px;font-size:12px;line-height:12px;transform:scaleX(0.915)">KASIR</div>
<div class="g" style="position:absolute;left:923px;top:385.84px;font-size:12px;line-height:12px;transform:scaleX(0.915)">4. ALL SHIFT</div>
<div class="g" style="position:absolute;left:1120px;top:385.84px;font-size:12px;line-height:12px;transform:scaleX(0.9)">DPSIL BURGER KING</div>
<div class="a" style="left:10px;top:400px;width:1234px;height:15px;background:#ffffff"></div>
<div class="a" style="left:0;top:400px;width:9px;height:15px;background:#f0f0f0;box-shadow:inset 1px 1px 0 #fff"></div>
<div class="a" style="left:0;top:415px;width:9px;height:1px;background:#000"></div>
<div class="a" style="left:10px;top:415px;width:1234px;height:1px;background:#c8c8c8"></div>
<div class="a" style="left:41px;top:401px;width:13px;height:13px;box-sizing:border-box;border:1px solid #6b6b6b;border-radius:3px;background:#f2f2f2"></div>
<div class="g" style="position:absolute;left:88px;top:401.84px;font-size:12px;line-height:12px;transform:scaleX(0.915)">03-06-2024</div>
<div class="g" style="position:absolute;left:164px;top:401.84px;font-size:12px;line-height:12px;transform:scaleX(0.915)">RST240603BPAW0ZN</div>
<div class="g" style="position:absolute;left:285px;top:401.84px;font-size:12px;line-height:12px;transform:scaleX(0.915)">RST24060300019</div>
<div class="g" style="position:absolute;left:406px;top:401.84px;font-size:12px;line-height:12px;transform:scaleX(0.915)">01</div>
<div class="g" style="position:absolute;left:508px;top:401.84px;font-size:12px;line-height:12px;transform:scaleX(0.915)">PUBLIC</div>
<div class="g" style="position:absolute;left:609px;top:401.84px;font-size:12px;line-height:12px;transform:scaleX(0.915)">14:29:04</div>
<div class="g" style="position:absolute;left:690px;top:401.84px;font-size:12px;line-height:12px;transform:scaleX(0.915)">14:29:04</div>
<div class="g" style="position:absolute;left:771px;top:401.84px;font-size:12px;line-height:12px;transform:scaleX(0.915)">paid</div>
<div class="g" style="position:absolute;left:842px;top:401.84px;font-size:12px;line-height:12px;transform:scaleX(0.915)">KASIR</div>
<div class="g" style="position:absolute;left:923px;top:401.84px;font-size:12px;line-height:12px;transform:scaleX(0.915)">4. ALL SHIFT</div>
<div class="g" style="position:absolute;left:1120px;top:401.84px;font-size:12px;line-height:12px;transform:scaleX(0.9)">DPSIL BURGER KING</div>
<div class="a" style="left:10px;top:416px;width:1234px;height:15px;background:#80ff00"></div>
<div class="a" style="left:0;top:416px;width:9px;height:15px;background:#f0f0f0;box-shadow:inset 1px 1px 0 #fff"></div>
<div class="a" style="left:0;top:431px;width:9px;height:1px;background:#000"></div>
<div class="a" style="left:10px;top:431px;width:1234px;height:1px;background:#c8c8c8"></div>
<div class="a" style="left:41px;top:417px;width:13px;height:13px;box-sizing:border-box;border:1px solid #6b6b6b;border-radius:3px;background:#f2f2f2"></div>
<div class="g" style="position:absolute;left:88px;top:417.84px;font-size:12px;line-height:12px;transform:scaleX(0.915)">03-06-2024</div>
<div class="g" style="position:absolute;left:164px;top:417.84px;font-size:12px;line-height:12px;transform:scaleX(0.915)">RST240603BPVTQFG</div>
<div class="g" style="position:absolute;left:285px;top:417.84px;font-size:12px;line-height:12px;transform:scaleX(0.915)">RST24060300020</div>
<div class="g" style="position:absolute;left:406px;top:417.84px;font-size:12px;line-height:12px;transform:scaleX(0.915)">TA</div>
<div class="g" style="position:absolute;left:508px;top:417.84px;font-size:12px;line-height:12px;transform:scaleX(0.915)">PUBLIC</div>
<div class="g" style="position:absolute;left:609px;top:417.84px;font-size:12px;line-height:12px;transform:scaleX(0.915)">16:07:38</div>
<div class="g" style="position:absolute;left:690px;top:417.84px;font-size:12px;line-height:12px;transform:scaleX(0.915)">00:00:00</div>
<div class="g" style="position:absolute;left:771px;top:417.84px;font-size:12px;line-height:12px;transform:scaleX(0.915)">Open</div>
<div class="g" style="position:absolute;left:842px;top:417.84px;font-size:12px;line-height:12px;transform:scaleX(0.915)">ADMIN</div>
<div class="g" style="position:absolute;left:923px;top:417.84px;font-size:12px;line-height:12px;transform:scaleX(0.915)">4. ALL SHIFT</div>
<div class="g" style="position:absolute;left:1120px;top:417.84px;font-size:12px;line-height:12px;transform:scaleX(0.9)">DPSIL BURGER KING</div>
<div class="a" style="left:10px;top:432px;width:1234px;height:15px;background:#80ff00"></div>
<div class="a" style="left:0;top:432px;width:9px;height:15px;background:#f0f0f0;box-shadow:inset 1px 1px 0 #fff"></div>
<div class="a" style="left:0;top:447px;width:9px;height:1px;background:#000"></div>
<div class="a" style="left:10px;top:447px;width:1234px;height:1px;background:#c8c8c8"></div>
<div class="a" style="left:41px;top:433px;width:13px;height:13px;box-sizing:border-box;border:1px solid #6b6b6b;border-radius:3px;background:#f2f2f2"></div>
<div class="g" style="position:absolute;left:88px;top:433.84px;font-size:12px;line-height:12px;transform:scaleX(0.915)">04-06-2024</div>
<div class="g" style="position:absolute;left:164px;top:433.84px;font-size:12px;line-height:12px;transform:scaleX(0.915)">RST240604BPCV0MK</div>
<div class="g" style="position:absolute;left:285px;top:433.84px;font-size:12px;line-height:12px;transform:scaleX(0.915)">RST24060400001</div>
<div class="g" style="position:absolute;left:406px;top:433.84px;font-size:12px;line-height:12px;transform:scaleX(0.915)">TA</div>
<div class="g" style="position:absolute;left:508px;top:433.84px;font-size:12px;line-height:12px;transform:scaleX(0.915)">PUBLIC</div>
<div class="g" style="position:absolute;left:609px;top:433.84px;font-size:12px;line-height:12px;transform:scaleX(0.915)">10:22:00</div>
<div class="g" style="position:absolute;left:690px;top:433.84px;font-size:12px;line-height:12px;transform:scaleX(0.915)">00:00:00</div>
<div class="g" style="position:absolute;left:771px;top:433.84px;font-size:12px;line-height:12px;transform:scaleX(0.915)">Open</div>
<div class="g" style="position:absolute;left:842px;top:433.84px;font-size:12px;line-height:12px;transform:scaleX(0.915)">KASIR</div>
<div class="g" style="position:absolute;left:923px;top:433.84px;font-size:12px;line-height:12px;transform:scaleX(0.915)">4. ALL SHIFT</div>
<div class="g" style="position:absolute;left:1120px;top:433.84px;font-size:12px;line-height:12px;transform:scaleX(0.9)">DPSIL BURGER KING</div>
<div class="a" style="left:10px;top:448px;width:1234px;height:15px;background:#ffffff"></div>
<div class="a" style="left:0;top:448px;width:9px;height:15px;background:#f0f0f0;box-shadow:inset 1px 1px 0 #fff"></div>
<div class="a" style="left:0;top:463px;width:9px;height:1px;background:#000"></div>
<div class="a" style="left:10px;top:463px;width:1234px;height:1px;background:#c8c8c8"></div>
<div class="a" style="left:41px;top:449px;width:13px;height:13px;box-sizing:border-box;border:1px solid #6b6b6b;border-radius:3px;background:#f2f2f2"></div>
<div class="g" style="position:absolute;left:88px;top:449.84px;font-size:12px;line-height:12px;transform:scaleX(0.915)">04-06-2024</div>
<div class="g" style="position:absolute;left:164px;top:449.84px;font-size:12px;line-height:12px;transform:scaleX(0.915)">RST240604BPD732K</div>
<div class="g" style="position:absolute;left:285px;top:449.84px;font-size:12px;line-height:12px;transform:scaleX(0.915)">RST24060400002</div>
<div class="g" style="position:absolute;left:406px;top:449.84px;font-size:12px;line-height:12px;transform:scaleX(0.915)">TA</div>
<div class="g" style="position:absolute;left:508px;top:449.84px;font-size:12px;line-height:12px;transform:scaleX(0.915)">PUBLIC</div>
<div class="g" style="position:absolute;left:609px;top:449.84px;font-size:12px;line-height:12px;transform:scaleX(0.915)">10:37:59</div>
<div class="g" style="position:absolute;left:690px;top:449.84px;font-size:12px;line-height:12px;transform:scaleX(0.915)">10:37:59</div>
<div class="g" style="position:absolute;left:771px;top:449.84px;font-size:12px;line-height:12px;transform:scaleX(0.915)">paid</div>
<div class="g" style="position:absolute;left:842px;top:449.84px;font-size:12px;line-height:12px;transform:scaleX(0.915)">KASIR</div>
<div class="g" style="position:absolute;left:923px;top:449.84px;font-size:12px;line-height:12px;transform:scaleX(0.915)">4. ALL SHIFT</div>
<div class="g" style="position:absolute;left:1120px;top:449.84px;font-size:12px;line-height:12px;transform:scaleX(0.9)">DPSIL BURGER KING</div>
<div class="a" style="left:10px;top:464px;width:1234px;height:15px;background:#ffff80"></div>
<div class="a" style="left:0;top:464px;width:9px;height:15px;background:#f0f0f0;box-shadow:inset 1px 1px 0 #fff"></div>
<div class="a" style="left:0;top:479px;width:9px;height:1px;background:#000"></div>
<div class="a" style="left:10px;top:479px;width:1234px;height:1px;background:#c8c8c8"></div>
<div class="a" style="left:41px;top:465px;width:13px;height:13px;box-sizing:border-box;border:1px solid #6b6b6b;border-radius:3px;background:#f2f2f2"></div>
<div class="g" style="position:absolute;left:88px;top:465.84px;font-size:12px;line-height:12px;transform:scaleX(0.915)">04-06-2024</div>
<div class="g" style="position:absolute;left:164px;top:465.84px;font-size:12px;line-height:12px;transform:scaleX(0.915)">RST240604BP0E3PG</div>
<div class="g" style="position:absolute;left:285px;top:465.84px;font-size:12px;line-height:12px;transform:scaleX(0.915)">RST24060400003</div>
<div class="g" style="position:absolute;left:406px;top:465.84px;font-size:12px;line-height:12px;transform:scaleX(0.915)">TA</div>
<div class="g" style="position:absolute;left:508px;top:465.84px;font-size:12px;line-height:12px;transform:scaleX(0.915)">PUBLIC</div>
<div class="g" style="position:absolute;left:609px;top:465.84px;font-size:12px;line-height:12px;transform:scaleX(0.915)">10:50:57</div>
<div class="g" style="position:absolute;left:690px;top:465.84px;font-size:12px;line-height:12px;transform:scaleX(0.915)">10:50:57</div>
<div class="g" style="position:absolute;left:771px;top:465.84px;font-size:12px;line-height:12px;transform:scaleX(0.915)">Void</div>
<div class="g" style="position:absolute;left:842px;top:465.84px;font-size:12px;line-height:12px;transform:scaleX(0.915)">KASIR</div>
<div class="g" style="position:absolute;left:923px;top:465.84px;font-size:12px;line-height:12px;transform:scaleX(0.915)">4. ALL SHIFT</div>
<div class="g" style="position:absolute;left:1120px;top:465.84px;font-size:12px;line-height:12px;transform:scaleX(0.9)">DPSIL BURGER KING</div>
<div class="a" style="left:10px;top:480px;width:1234px;height:15px;background:#ffff80"></div>
<div class="a" style="left:0;top:480px;width:9px;height:15px;background:#f0f0f0;box-shadow:inset 1px 1px 0 #fff"></div>
<div class="a" style="left:0;top:495px;width:9px;height:1px;background:#000"></div>
<div class="a" style="left:10px;top:495px;width:1234px;height:1px;background:#c8c8c8"></div>
<div class="a" style="left:41px;top:481px;width:13px;height:13px;box-sizing:border-box;border:1px solid #6b6b6b;border-radius:3px;background:#f2f2f2"></div>
<div class="g" style="position:absolute;left:88px;top:481.84px;font-size:12px;line-height:12px;transform:scaleX(0.915)">04-06-2024</div>
<div class="g" style="position:absolute;left:164px;top:481.84px;font-size:12px;line-height:12px;transform:scaleX(0.915)">RST240604BP29AR7</div>
<div class="g" style="position:absolute;left:285px;top:481.84px;font-size:12px;line-height:12px;transform:scaleX(0.915)">RST24060400004</div>
<div class="g" style="position:absolute;left:406px;top:481.84px;font-size:12px;line-height:12px;transform:scaleX(0.915)">TA</div>
<div class="g" style="position:absolute;left:508px;top:481.84px;font-size:12px;line-height:12px;transform:scaleX(0.915)">PUBLIC</div>
<div class="g" style="position:absolute;left:609px;top:481.84px;font-size:12px;line-height:12px;transform:scaleX(0.915)">10:54:25</div>
<div class="g" style="position:absolute;left:690px;top:481.84px;font-size:12px;line-height:12px;transform:scaleX(0.915)">10:54:25</div>
<div class="g" style="position:absolute;left:771px;top:481.84px;font-size:12px;line-height:12px;transform:scaleX(0.915)">Void</div>
<div class="g" style="position:absolute;left:842px;top:481.84px;font-size:12px;line-height:12px;transform:scaleX(0.915)">KASIR</div>
<div class="g" style="position:absolute;left:923px;top:481.84px;font-size:12px;line-height:12px;transform:scaleX(0.915)">4. ALL SHIFT</div>
<div class="g" style="position:absolute;left:1120px;top:481.84px;font-size:12px;line-height:12px;transform:scaleX(0.9)">DPSIL BURGER KING</div>
<div class="a" style="left:10px;top:496px;width:1234px;height:15px;background:#ffff80"></div>
<div class="a" style="left:0;top:496px;width:9px;height:15px;background:#f0f0f0;box-shadow:inset 1px 1px 0 #fff"></div>
<div class="a" style="left:0;top:511px;width:9px;height:1px;background:#000"></div>
<div class="a" style="left:10px;top:511px;width:1234px;height:1px;background:#c8c8c8"></div>
<div class="a" style="left:41px;top:497px;width:13px;height:13px;box-sizing:border-box;border:1px solid #6b6b6b;border-radius:3px;background:#f2f2f2"></div>
<div class="g" style="position:absolute;left:88px;top:497.84px;font-size:12px;line-height:12px;transform:scaleX(0.915)">04-06-2024</div>
<div class="g" style="position:absolute;left:164px;top:497.84px;font-size:12px;line-height:12px;transform:scaleX(0.915)">RST240604BP08ZD1</div>
<div class="g" style="position:absolute;left:285px;top:497.84px;font-size:12px;line-height:12px;transform:scaleX(0.915)">RST24060400005</div>
<div class="g" style="position:absolute;left:406px;top:497.84px;font-size:12px;line-height:12px;transform:scaleX(0.915)">TA</div>
<div class="g" style="position:absolute;left:508px;top:497.84px;font-size:12px;line-height:12px;transform:scaleX(0.915)">PUBLIC</div>
<div class="g" style="position:absolute;left:609px;top:497.84px;font-size:12px;line-height:12px;transform:scaleX(0.915)">10:58:11</div>
<div class="g" style="position:absolute;left:690px;top:497.84px;font-size:12px;line-height:12px;transform:scaleX(0.915)">10:58:11</div>
<div class="g" style="position:absolute;left:771px;top:497.84px;font-size:12px;line-height:12px;transform:scaleX(0.915)">Void</div>
<div class="g" style="position:absolute;left:842px;top:497.84px;font-size:12px;line-height:12px;transform:scaleX(0.915)">KASIR</div>
<div class="g" style="position:absolute;left:923px;top:497.84px;font-size:12px;line-height:12px;transform:scaleX(0.915)">4. ALL SHIFT</div>
<div class="g" style="position:absolute;left:1120px;top:497.84px;font-size:12px;line-height:12px;transform:scaleX(0.9)">DPSIL BURGER KING</div>
<div class="a" style="left:10px;top:512px;width:1234px;height:15px;background:#ffff80"></div>
<div class="a" style="left:0;top:512px;width:9px;height:15px;background:#f0f0f0;box-shadow:inset 1px 1px 0 #fff"></div>
<div class="a" style="left:0;top:527px;width:9px;height:1px;background:#000"></div>
<div class="a" style="left:10px;top:527px;width:1234px;height:1px;background:#c8c8c8"></div>
<div class="a" style="left:41px;top:513px;width:13px;height:13px;box-sizing:border-box;border:1px solid #6b6b6b;border-radius:3px;background:#f2f2f2"></div>
<div class="g" style="position:absolute;left:88px;top:513.84px;font-size:12px;line-height:12px;transform:scaleX(0.915)">04-06-2024</div>
<div class="g" style="position:absolute;left:164px;top:513.84px;font-size:12px;line-height:12px;transform:scaleX(0.915)">RST240604BPPN9W8</div>
<div class="g" style="position:absolute;left:285px;top:513.84px;font-size:12px;line-height:12px;transform:scaleX(0.915)">RST24060400006</div>
<div class="g" style="position:absolute;left:406px;top:513.84px;font-size:12px;line-height:12px;transform:scaleX(0.915)">TA</div>
<div class="g" style="position:absolute;left:508px;top:513.84px;font-size:12px;line-height:12px;transform:scaleX(0.915)">PUBLIC</div>
<div class="g" style="position:absolute;left:609px;top:513.84px;font-size:12px;line-height:12px;transform:scaleX(0.915)">11:05:07</div>
<div class="g" style="position:absolute;left:690px;top:513.84px;font-size:12px;line-height:12px;transform:scaleX(0.915)">11:05:07</div>
<div class="g" style="position:absolute;left:771px;top:513.84px;font-size:12px;line-height:12px;transform:scaleX(0.915)">Void</div>
<div class="g" style="position:absolute;left:842px;top:513.84px;font-size:12px;line-height:12px;transform:scaleX(0.915)">KASIR</div>
<div class="g" style="position:absolute;left:923px;top:513.84px;font-size:12px;line-height:12px;transform:scaleX(0.915)">4. ALL SHIFT</div>
<div class="g" style="position:absolute;left:1120px;top:513.84px;font-size:12px;line-height:12px;transform:scaleX(0.9)">DPSIL BURGER KING</div>
<div class="a" style="left:10px;top:528px;width:1234px;height:15px;background:#ffff80"></div>
<div class="a" style="left:0;top:528px;width:9px;height:15px;background:#f0f0f0;box-shadow:inset 1px 1px 0 #fff"></div>
<div class="a" style="left:0;top:543px;width:9px;height:1px;background:#000"></div>
<div class="a" style="left:10px;top:543px;width:1234px;height:1px;background:#c8c8c8"></div>
<div class="a" style="left:41px;top:529px;width:13px;height:13px;box-sizing:border-box;border:1px solid #6b6b6b;border-radius:3px;background:#f2f2f2"></div>
<div class="g" style="position:absolute;left:88px;top:529.84px;font-size:12px;line-height:12px;transform:scaleX(0.915)">04-06-2024</div>
<div class="g" style="position:absolute;left:164px;top:529.84px;font-size:12px;line-height:12px;transform:scaleX(0.915)">RST240604BPTLF0G</div>
<div class="g" style="position:absolute;left:285px;top:529.84px;font-size:12px;line-height:12px;transform:scaleX(0.915)">RST24060400007</div>
<div class="g" style="position:absolute;left:406px;top:529.84px;font-size:12px;line-height:12px;transform:scaleX(0.915)">TA</div>
<div class="g" style="position:absolute;left:508px;top:529.84px;font-size:12px;line-height:12px;transform:scaleX(0.915)">PUBLIC</div>
<div class="g" style="position:absolute;left:609px;top:529.84px;font-size:12px;line-height:12px;transform:scaleX(0.915)">11:11:54</div>
<div class="g" style="position:absolute;left:690px;top:529.84px;font-size:12px;line-height:12px;transform:scaleX(0.915)">11:11:54</div>
<div class="g" style="position:absolute;left:771px;top:529.84px;font-size:12px;line-height:12px;transform:scaleX(0.915)">Void</div>
<div class="g" style="position:absolute;left:842px;top:529.84px;font-size:12px;line-height:12px;transform:scaleX(0.915)">KASIR</div>
<div class="g" style="position:absolute;left:923px;top:529.84px;font-size:12px;line-height:12px;transform:scaleX(0.915)">4. ALL SHIFT</div>
<div class="g" style="position:absolute;left:1120px;top:529.84px;font-size:12px;line-height:12px;transform:scaleX(0.9)">DPSIL BURGER KING</div>
<div class="a" style="left:10px;top:544px;width:1234px;height:15px;background:#80ff00"></div>
<div class="a" style="left:0;top:544px;width:9px;height:15px;background:#f0f0f0;box-shadow:inset 1px 1px 0 #fff"></div>
<div class="a" style="left:0;top:559px;width:9px;height:1px;background:#000"></div>
<div class="a" style="left:10px;top:559px;width:1234px;height:1px;background:#c8c8c8"></div>
<div class="a" style="left:41px;top:545px;width:13px;height:13px;box-sizing:border-box;border:1px solid #6b6b6b;border-radius:3px;background:#f2f2f2"></div>
<div class="g" style="position:absolute;left:88px;top:545.84px;font-size:12px;line-height:12px;transform:scaleX(0.915)">04-06-2024</div>
<div class="g" style="position:absolute;left:164px;top:545.84px;font-size:12px;line-height:12px;transform:scaleX(0.915)">RST240604BPR0ZMG</div>
<div class="g" style="position:absolute;left:285px;top:545.84px;font-size:12px;line-height:12px;transform:scaleX(0.915)">RST24060400008</div>
<div class="g" style="position:absolute;left:406px;top:545.84px;font-size:12px;line-height:12px;transform:scaleX(0.915)">TA</div>
<div class="g" style="position:absolute;left:508px;top:545.84px;font-size:12px;line-height:12px;transform:scaleX(0.915)">PUBLIC</div>
<div class="g" style="position:absolute;left:609px;top:545.84px;font-size:12px;line-height:12px;transform:scaleX(0.915)">09:38:04</div>
<div class="g" style="position:absolute;left:690px;top:545.84px;font-size:12px;line-height:12px;transform:scaleX(0.915)">00:00:00</div>
<div class="g" style="position:absolute;left:771px;top:545.84px;font-size:12px;line-height:12px;transform:scaleX(0.915)">Open</div>
<div class="g" style="position:absolute;left:842px;top:545.84px;font-size:12px;line-height:12px;transform:scaleX(0.915)">ADMIN</div>
<div class="g" style="position:absolute;left:923px;top:545.84px;font-size:12px;line-height:12px;transform:scaleX(0.915)">4. ALL SHIFT</div>
<div class="g" style="position:absolute;left:1120px;top:545.84px;font-size:12px;line-height:12px;transform:scaleX(0.9)">DPSIL BURGER KING</div>
<div class="a" style="left:10px;top:560px;width:1234px;height:15px;background:#80ff00"></div>
<div class="a" style="left:0;top:560px;width:9px;height:15px;background:#f0f0f0;box-shadow:inset 1px 1px 0 #fff"></div>
<div class="a" style="left:0;top:575px;width:9px;height:1px;background:#000"></div>
<div class="a" style="left:10px;top:575px;width:1234px;height:1px;background:#c8c8c8"></div>
<div class="a" style="left:41px;top:561px;width:13px;height:13px;box-sizing:border-box;border:1px solid #6b6b6b;border-radius:3px;background:#f2f2f2"></div>
<div class="g" style="position:absolute;left:88px;top:561.84px;font-size:12px;line-height:12px;transform:scaleX(0.915)">04-06-2024</div>
<div class="g" style="position:absolute;left:164px;top:561.84px;font-size:12px;line-height:12px;transform:scaleX(0.915)">RST240604BP4AKUZ</div>
<div class="g" style="position:absolute;left:285px;top:561.84px;font-size:12px;line-height:12px;transform:scaleX(0.915)">RST24060400009</div>
<div class="g" style="position:absolute;left:406px;top:561.84px;font-size:12px;line-height:12px;transform:scaleX(0.915)">TA</div>
<div class="g" style="position:absolute;left:508px;top:561.84px;font-size:12px;line-height:12px;transform:scaleX(0.915)">PUBLIC</div>
<div class="g" style="position:absolute;left:609px;top:561.84px;font-size:12px;line-height:12px;transform:scaleX(0.915)">09:50:23</div>
<div class="g" style="position:absolute;left:690px;top:561.84px;font-size:12px;line-height:12px;transform:scaleX(0.915)">00:00:00</div>
<div class="g" style="position:absolute;left:771px;top:561.84px;font-size:12px;line-height:12px;transform:scaleX(0.915)">Open</div>
<div class="g" style="position:absolute;left:842px;top:561.84px;font-size:12px;line-height:12px;transform:scaleX(0.915)">KASIR</div>
<div class="g" style="position:absolute;left:923px;top:561.84px;font-size:12px;line-height:12px;transform:scaleX(0.915)">4. ALL SHIFT</div>
<div class="g" style="position:absolute;left:1120px;top:561.84px;font-size:12px;line-height:12px;transform:scaleX(0.9)">DPSIL BURGER KING</div>
<div class="a" style="left:1243px;top:0;width:1px;height:571px;background:#ececec"></div>
<div class="a" style="left:85px;top:0;width:1px;height:571px;background:#c8c8c8"></div>
<div class="a" style="left:161px;top:0;width:1px;height:571px;background:#c8c8c8"></div>
<div class="a" style="left:282px;top:0;width:1px;height:571px;background:#c8c8c8"></div>
<div class="a" style="left:403px;top:0;width:1px;height:571px;background:#c8c8c8"></div>
<div class="a" style="left:454px;top:0;width:1px;height:571px;background:#c8c8c8"></div>
<div class="a" style="left:505px;top:0;width:1px;height:571px;background:#c8c8c8"></div>
<div class="a" style="left:606px;top:0;width:1px;height:571px;background:#c8c8c8"></div>
<div class="a" style="left:687px;top:0;width:1px;height:571px;background:#c8c8c8"></div>
<div class="a" style="left:768px;top:0;width:1px;height:571px;background:#c8c8c8"></div>
<div class="a" style="left:839px;top:0;width:1px;height:571px;background:#c8c8c8"></div>
<div class="a" style="left:920px;top:0;width:1px;height:571px;background:#c8c8c8"></div>
<div class="a" style="left:996px;top:0;width:1px;height:571px;background:#c8c8c8"></div>
<div class="a" style="left:1117px;top:0;width:1px;height:571px;background:#c8c8c8"></div>
</div>
<div class="a" style="left:19px;top:205px;width:1234px;height:1px;background:#0a78d7"></div>
<div class="a" style="left:19px;top:221px;width:1234px;height:1px;background:#0a78d7"></div>
<div class="a" style="left:19px;top:205px;width:1px;height:17px;background:#0a78d7"></div>
<div class="a" style="left:1252px;top:205px;width:1px;height:17px;background:#0a78d7"></div>
<div class="a" style="left:13px;top:209px;width:0;height:0;border-top:4px solid transparent;border-bottom:4px solid transparent;border-left:4px solid #000"></div>
<div class="a" style="left:930px;top:205px;width:75px;height:17px;background:#0a78d7"></div>
<div class="a" style="left:931px;top:206px;width:73px;height:15px;background:#fff"></div>
<div class="a" style="left:941px;top:206px;width:6px;height:15px;background:#0a78d7"></div>
<div class="a g" style="left:951px;top:207.84px;font-size:12px;line-height:12px;transform:scaleX(0.89);">4. ALL SH</div>
<div class="a" style="left:1253px;top:150px;width:16px;height:611px;background-color:#fff;background-image:repeating-conic-gradient(#e6e6e6 0 25%,#fff 0 50%);background-size:2px 2px"></div>
<div class="a" style="left:1253px;top:150px;width:16px;height:17px;background:#696969"></div>
<div class="a" style="left:1253px;top:150px;width:15px;height:16px;background:#fff"></div>
<div class="a" style="left:1254px;top:151px;width:14px;height:15px;background:#a0a0a0"></div>
<div class="a" style="left:1254px;top:151px;width:13px;height:14px;background:#f0f0f0"></div>
<div class="a" style="left:1257px;top:156px;width:0;height:0;border-left:4px solid transparent;border-right:4px solid transparent;border-bottom:4px solid #000"></div>
<div class="a" style="left:1253px;top:175px;width:16px;height:26px;background:#696969"></div>
<div class="a" style="left:1253px;top:175px;width:15px;height:25px;background:#fff"></div>
<div class="a" style="left:1254px;top:176px;width:14px;height:24px;background:#a0a0a0"></div>
<div class="a" style="left:1254px;top:176px;width:13px;height:23px;background:#f0f0f0"></div>
<div class="a" style="left:1253px;top:745px;width:16px;height:16px;background:#696969"></div>
<div class="a" style="left:1253px;top:745px;width:15px;height:15px;background:#fff"></div>
<div class="a" style="left:1254px;top:746px;width:14px;height:14px;background:#a0a0a0"></div>
<div class="a" style="left:1254px;top:746px;width:13px;height:13px;background:#f0f0f0"></div>
<div class="a" style="left:1257px;top:751px;width:0;height:0;border-left:4px solid transparent;border-right:4px solid transparent;border-top:4px solid #000"></div>
<div class="a" style="left:9px;top:761px;width:5px;height:17px;background:#000"></div>
<div class="a" style="left:14px;top:761px;width:1239px;height:17px;background-color:#fff;background-image:repeating-conic-gradient(#e6e6e6 0 25%,#fff 0 50%);background-size:2px 2px"></div>
<div class="a" style="left:14px;top:761px;width:17px;height:17px;background:#696969"></div>
<div class="a" style="left:14px;top:761px;width:16px;height:16px;background:#fff"></div>
<div class="a" style="left:15px;top:762px;width:15px;height:15px;background:#a0a0a0"></div>
<div class="a" style="left:15px;top:762px;width:14px;height:14px;background:#f0f0f0"></div>
<div class="a" style="left:19px;top:765px;width:0;height:0;border-top:4px solid transparent;border-bottom:4px solid transparent;border-right:4px solid #000"></div>
<div class="a" style="left:31px;top:761px;width:57px;height:17px;background:#696969"></div>
<div class="a" style="left:31px;top:761px;width:56px;height:16px;background:#fff"></div>
<div class="a" style="left:32px;top:762px;width:55px;height:15px;background:#a0a0a0"></div>
<div class="a" style="left:32px;top:762px;width:54px;height:14px;background:#f0f0f0"></div>
<div class="a" style="left:1236px;top:761px;width:17px;height:17px;background:#696969"></div>
<div class="a" style="left:1236px;top:761px;width:16px;height:16px;background:#fff"></div>
<div class="a" style="left:1237px;top:762px;width:15px;height:15px;background:#a0a0a0"></div>
<div class="a" style="left:1237px;top:762px;width:14px;height:14px;background:#f0f0f0"></div>
<div class="a" style="left:1242px;top:765px;width:0;height:0;border-top:4px solid transparent;border-bottom:4px solid transparent;border-left:4px solid #000"></div>
<div class="a" style="left:1253px;top:761px;width:17px;height:17px;background:#fff"></div>
<div class="a" style="left:8px;top:781px;width:1266px;height:1px;background:#a0a0a0"></div>
<div class="a" style="left:8px;top:782px;width:1266px;height:1px;background:#fff"></div>
<div class="a" style="left:8px;top:812px;width:1266px;height:1px;background:#a0a0a0"></div>
<div class="a" style="left:8px;top:813px;width:1266px;height:1px;background:#fff"></div>
<div class="a" style="left:8px;top:781px;width:1px;height:32px;background:#a0a0a0"></div>
<div class="a" style="left:9px;top:782px;width:1px;height:31px;background:#fff"></div>
<div class="a" style="left:1272px;top:781px;width:1px;height:32px;background:#a0a0a0"></div>
<div class="a" style="left:1273px;top:781px;width:1px;height:33px;background:#fff"></div>
<div class="a g" style="left:12.5px;top:789.84px;font-size:12px;line-height:12px;transform:scaleX(0.915);">PAIDBILL LAST NIGHT</div>
<div class="fld" style="left:130px;top:784px;width:89px;height:25px"></div>
<div class="a g" style="right:992px;top:789.84px;font-size:12px;line-height:12px;transform:scaleX(0.915);transform-origin:100% 0;">AM</div>
<div class="fld" style="left:290px;top:784px;width:57px;height:25px"></div>
<div class="a g" style="right:934px;top:789.84px;font-size:12px;line-height:12px;transform:scaleX(1.0);transform-origin:100% 0;letter-spacing:0.4px">0</div>
<div class="a g" style="left:349.5px;top:789.84px;font-size:12px;line-height:12px;transform:scaleX(0.915);">PM</div>
<div class="fld" style="left:370px;top:784px;width:57px;height:25px"></div>
<div class="a g" style="right:854px;top:789.84px;font-size:12px;line-height:12px;transform:scaleX(1.0);transform-origin:100% 0;letter-spacing:0.4px">0</div>
<div class="a g" style="left:429.5px;top:789.84px;font-size:12px;line-height:12px;transform:scaleX(0.915);">ALL BILL</div>
<div class="fld" style="left:485px;top:784px;width:66px;height:25px"></div>
<div class="a g" style="right:732px;top:789.84px;font-size:12px;line-height:12px;transform:scaleX(1.0);transform-origin:100% 0;letter-spacing:0.4px">814</div>
<div class="a g" style="left:556.5px;top:789.84px;font-size:12px;line-height:12px;transform:scaleX(0.915);">PAX</div>
<div class="fld" style="left:581px;top:784px;width:67px;height:25px"></div>
<div class="a g" style="right:635px;top:789.84px;font-size:12px;line-height:12px;transform:scaleX(1.0);transform-origin:100% 0;letter-spacing:0.4px">882</div>
<div class="a g" style="left:652.5px;top:789.84px;font-size:12px;line-height:12px;transform:scaleX(0.915);">OPEN</div>
<div class="fld" style="left:688px;top:784px;width:61px;height:25px"></div>
<div class="a g" style="right:540px;top:789.84px;font-size:12px;line-height:12px;transform:scaleX(1.0);transform-origin:100% 0;letter-spacing:0.4px">153</div>
<div class="a g" style="left:751.5px;top:789.84px;font-size:12px;line-height:12px;transform:scaleX(0.915);">PAID</div>
<div class="fld" style="left:783px;top:784px;width:67px;height:25px"></div>
<div class="a g" style="right:447px;top:789.84px;font-size:12px;line-height:12px;transform:scaleX(1.0);transform-origin:100% 0;letter-spacing:0.4px">661</div>
<div class="a t" style="left:914px;top:788.84px;font-size:12px;line-height:12px;color:#0a0a2a">NET</div>
<div class="fld" style="left:944px;top:784px;width:124px;height:25px"></div>
<div class="a g" style="right:215px;top:789.84px;font-size:12px;line-height:12px;transform:scaleX(1.0);transform-origin:100% 0;letter-spacing:0.4px">110,818,772</div>
<div class="a g" style="left:1073.5px;top:789.84px;font-size:12px;line-height:12px;transform:scaleX(0.915);">GROSS PAID</div>
<div class="fld" style="left:1143px;top:784px;width:127px;height:25px"></div>
<div class="a g" style="right:13px;top:789.84px;font-size:12px;line-height:12px;transform:scaleX(1.0);transform-origin:100% 0;letter-spacing:0.4px">127,894,959</div>
<div class="btn" style="left:10px"></div>
<div class="a t" style="left:12px;width:93px;text-align:center;top:868.69px;font-size:11px;line-height:11px;letter-spacing:-0.25px;color:#0a0a2a"><u>E</u>dit Data</div>
<div class="btn" style="left:108px"></div>
<div class="a t" style="left:110px;width:93px;text-align:center;top:868.69px;font-size:11px;line-height:11px;letter-spacing:-0.25px;color:#0a0a2a"><u>V</u>oid Bill</div>
<div class="btn" style="left:304px"></div>
<div class="a t" style="left:306px;width:93px;text-align:center;top:868.69px;font-size:11px;line-height:11px;letter-spacing:-0.25px;color:#0a0a2a"><u>C</u>hange Shift</div>
<div class="btn" style="left:402px"></div>
<div class="a t" style="left:404px;width:93px;text-align:center;top:868.69px;font-size:11px;line-height:11px;letter-spacing:-0.25px;color:#0a0a2a"><u>D</u>elivery Order</div>
<div class="btn" style="left:878px"></div>
<div class="a t" style="left:880px;width:93px;text-align:center;top:868.69px;font-size:11px;line-height:11px;letter-spacing:-0.25px;color:#0a0a2a"><u>E</u>xport</div>
<div class="btn" style="left:979px"></div>
<div class="a t" style="left:981px;width:93px;text-align:center;top:868.69px;font-size:11px;line-height:11px;letter-spacing:-0.25px;color:#0a0a2a"><u>U</u>pdate Paid Bill</div>
<div class="btn" style="left:1079px"></div>
<div class="a t" style="left:1081px;width:93px;text-align:center;top:868.69px;font-size:11px;line-height:11px;letter-spacing:-0.25px;color:#0a0a2a"><u>R</u>eindex Bill</div>
<div class="a" style="left:1176px;top:818px;width:96px;height:68px;box-sizing:border-box;border:1px solid #dccfcf;border-radius:3px;background:#ffeeee"></div>
<div class="a t" style="left:1176px;width:96px;text-align:center;top:862.69px;font-size:11px;line-height:11px;letter-spacing:-0.25px;color:#0a0a2a"><u>C</u>lose</div>
<svg class="a" style="left:1209px;top:827px" width="31" height="31" viewBox="0 0 31 31"><circle cx="15.5" cy="15.5" r="15" fill="#63b1f0"/><path d="M10.3 10 L20.7 20.5 M20.7 10 L10.3 20.5" stroke="#000" stroke-width="2.8" stroke-linecap="round"/></svg>
<svg class="a" style="left:330px;top:820px" width="40" height="40" viewBox="0 0 40 40"><defs>
<linearGradient id="gg335" x1="0.2" y1="0.1" x2="0.85" y2="0.95"><stop offset="0" stop-color="#cfcfcf"/><stop offset="0.55" stop-color="#8c8c8c"/><stop offset="1" stop-color="#454545"/></linearGradient>
<radialGradient id="gc335" cx="45%" cy="45%" r="60%"><stop offset="0" stop-color="#f0f0f0"/><stop offset="0.35" stop-color="#6a6a6a"/><stop offset="1" stop-color="#b0b0b0"/></radialGradient></defs>
<polygon points="18.42,8.87 18.87,6.88 21.13,6.88 21.58,8.87 23.04,9.14 24.20,7.44 26.31,8.23 25.99,10.25 27.25,11.01 28.97,9.83 30.64,11.31 29.59,13.07 30.49,14.22 32.53,13.72 33.53,15.69 31.89,16.97 32.30,18.36 34.39,18.60 34.60,20.79 32.59,21.41 32.46,22.84 34.31,23.81 33.69,25.92 31.59,25.79 30.93,27.08 32.30,28.63 30.93,30.39 29.02,29.53 27.92,30.50 28.63,32.43 26.70,33.58 25.24,32.12 23.85,32.64 23.79,34.68 21.56,35.08 20.74,33.20 19.26,33.20 18.44,35.08 16.21,34.68 16.15,32.64 14.76,32.12 13.30,33.58 11.37,32.43 12.08,30.50 10.98,29.53 9.07,30.39 7.70,28.63 9.07,27.08 8.41,25.79 6.31,25.92 5.69,23.81 7.54,22.84 7.41,21.41 5.40,20.79 5.61,18.60 7.70,18.36 8.11,16.97 6.47,15.69 7.47,13.72 9.51,14.22 10.41,13.07 9.36,11.31 11.03,9.83 12.75,11.01 14.01,10.25 13.69,8.23 15.80,7.44 16.96,9.14" fill="url(#gg335)" stroke="#777" stroke-width="0.6" stroke-linejoin="round"/>
<circle cx="20.0" cy="21.0" r="10" fill="#a8a8a8"/>
<ellipse cx="20.0" cy="21.0" rx="7.6" ry="7.8" fill="none" stroke="#b89a80" stroke-width="0.5"/>
<ellipse cx="20.0" cy="21.0" rx="6.6" ry="6.8" fill="none" stroke="#1f8ff0" stroke-width="1.9"/>
<circle cx="20.0" cy="21.0" r="4.8" fill="url(#gc335)"/>
<circle cx="20.8" cy="20.4" r="1.3" fill="#fff"/>
<path d="M17.0 18.8 A3 3 0 0 1 19.0 17.4" stroke="#222" stroke-width="1.2" fill="none"/>
</svg>
<svg class="a" style="left:428px;top:820px" width="40" height="40" viewBox="0 0 40 40"><defs>
<linearGradient id="gg433" x1="0.2" y1="0.1" x2="0.85" y2="0.95"><stop offset="0" stop-color="#cfcfcf"/><stop offset="0.55" stop-color="#8c8c8c"/><stop offset="1" stop-color="#454545"/></linearGradient>
<radialGradient id="gc433" cx="45%" cy="45%" r="60%"><stop offset="0" stop-color="#f0f0f0"/><stop offset="0.35" stop-color="#6a6a6a"/><stop offset="1" stop-color="#b0b0b0"/></radialGradient></defs>
<polygon points="18.42,8.87 18.87,6.88 21.13,6.88 21.58,8.87 23.04,9.14 24.20,7.44 26.31,8.23 25.99,10.25 27.25,11.01 28.97,9.83 30.64,11.31 29.59,13.07 30.49,14.22 32.53,13.72 33.53,15.69 31.89,16.97 32.30,18.36 34.39,18.60 34.60,20.79 32.59,21.41 32.46,22.84 34.31,23.81 33.69,25.92 31.59,25.79 30.93,27.08 32.30,28.63 30.93,30.39 29.02,29.53 27.92,30.50 28.63,32.43 26.70,33.58 25.24,32.12 23.85,32.64 23.79,34.68 21.56,35.08 20.74,33.20 19.26,33.20 18.44,35.08 16.21,34.68 16.15,32.64 14.76,32.12 13.30,33.58 11.37,32.43 12.08,30.50 10.98,29.53 9.07,30.39 7.70,28.63 9.07,27.08 8.41,25.79 6.31,25.92 5.69,23.81 7.54,22.84 7.41,21.41 5.40,20.79 5.61,18.60 7.70,18.36 8.11,16.97 6.47,15.69 7.47,13.72 9.51,14.22 10.41,13.07 9.36,11.31 11.03,9.83 12.75,11.01 14.01,10.25 13.69,8.23 15.80,7.44 16.96,9.14" fill="url(#gg433)" stroke="#777" stroke-width="0.6" stroke-linejoin="round"/>
<circle cx="20.0" cy="21.0" r="10" fill="#a8a8a8"/>
<ellipse cx="20.0" cy="21.0" rx="7.6" ry="7.8" fill="none" stroke="#b89a80" stroke-width="0.5"/>
<ellipse cx="20.0" cy="21.0" rx="6.6" ry="6.8" fill="none" stroke="#1f8ff0" stroke-width="1.9"/>
<circle cx="20.0" cy="21.0" r="4.8" fill="url(#gc433)"/>
<circle cx="20.8" cy="20.4" r="1.3" fill="#fff"/>
<path d="M17.0 18.8 A3 3 0 0 1 19.0 17.4" stroke="#222" stroke-width="1.2" fill="none"/>
</svg>
<svg class="a" style="left:1004px;top:820px" width="40" height="40" viewBox="0 0 40 40"><defs>
<linearGradient id="gg1009" x1="0.2" y1="0.1" x2="0.85" y2="0.95"><stop offset="0" stop-color="#cfcfcf"/><stop offset="0.55" stop-color="#8c8c8c"/><stop offset="1" stop-color="#454545"/></linearGradient>
<radialGradient id="gc1009" cx="45%" cy="45%" r="60%"><stop offset="0" stop-color="#f0f0f0"/><stop offset="0.35" stop-color="#6a6a6a"/><stop offset="1" stop-color="#b0b0b0"/></radialGradient></defs>
<polygon points="18.42,8.87 18.87,6.88 21.13,6.88 21.58,8.87 23.04,9.14 24.20,7.44 26.31,8.23 25.99,10.25 27.25,11.01 28.97,9.83 30.64,11.31 29.59,13.07 30.49,14.22 32.53,13.72 33.53,15.69 31.89,16.97 32.30,18.36 34.39,18.60 34.60,20.79 32.59,21.41 32.46,22.84 34.31,23.81 33.69,25.92 31.59,25.79 30.93,27.08 32.30,28.63 30.93,30.39 29.02,29.53 27.92,30.50 28.63,32.43 26.70,33.58 25.24,32.12 23.85,32.64 23.79,34.68 21.56,35.08 20.74,33.20 19.26,33.20 18.44,35.08 16.21,34.68 16.15,32.64 14.76,32.12 13.30,33.58 11.37,32.43 12.08,30.50 10.98,29.53 9.07,30.39 7.70,28.63 9.07,27.08 8.41,25.79 6.31,25.92 5.69,23.81 7.54,22.84 7.41,21.41 5.40,20.79 5.61,18.60 7.70,18.36 8.11,16.97 6.47,15.69 7.47,13.72 9.51,14.22 10.41,13.07 9.36,11.31 11.03,9.83 12.75,11.01 14.01,10.25 13.69,8.23 15.80,7.44 16.96,9.14" fill="url(#gg1009)" stroke="#777" stroke-width="0.6" stroke-linejoin="round"/>
<circle cx="20.0" cy="21.0" r="10" fill="#a8a8a8"/>
<ellipse cx="20.0" cy="21.0" rx="7.6" ry="7.8" fill="none" stroke="#b89a80" stroke-width="0.5"/>
<ellipse cx="20.0" cy="21.0" rx="6.6" ry="6.8" fill="none" stroke="#1f8ff0" stroke-width="1.9"/>
<circle cx="20.0" cy="21.0" r="4.8" fill="url(#gc1009)"/>
<circle cx="20.8" cy="20.4" r="1.3" fill="#fff"/>
<path d="M17.0 18.8 A3 3 0 0 1 19.0 17.4" stroke="#222" stroke-width="1.2" fill="none"/>
</svg>
<svg class="a" style="left:1105px;top:820px" width="40" height="40" viewBox="0 0 40 40"><defs>
<linearGradient id="gg1110" x1="0.2" y1="0.1" x2="0.85" y2="0.95"><stop offset="0" stop-color="#cfcfcf"/><stop offset="0.55" stop-color="#8c8c8c"/><stop offset="1" stop-color="#454545"/></linearGradient>
<radialGradient id="gc1110" cx="45%" cy="45%" r="60%"><stop offset="0" stop-color="#f0f0f0"/><stop offset="0.35" stop-color="#6a6a6a"/><stop offset="1" stop-color="#b0b0b0"/></radialGradient></defs>
<polygon points="18.42,8.87 18.87,6.88 21.13,6.88 21.58,8.87 23.04,9.14 24.20,7.44 26.31,8.23 25.99,10.25 27.25,11.01 28.97,9.83 30.64,11.31 29.59,13.07 30.49,14.22 32.53,13.72 33.53,15.69 31.89,16.97 32.30,18.36 34.39,18.60 34.60,20.79 32.59,21.41 32.46,22.84 34.31,23.81 33.69,25.92 31.59,25.79 30.93,27.08 32.30,28.63 30.93,30.39 29.02,29.53 27.92,30.50 28.63,32.43 26.70,33.58 25.24,32.12 23.85,32.64 23.79,34.68 21.56,35.08 20.74,33.20 19.26,33.20 18.44,35.08 16.21,34.68 16.15,32.64 14.76,32.12 13.30,33.58 11.37,32.43 12.08,30.50 10.98,29.53 9.07,30.39 7.70,28.63 9.07,27.08 8.41,25.79 6.31,25.92 5.69,23.81 7.54,22.84 7.41,21.41 5.40,20.79 5.61,18.60 7.70,18.36 8.11,16.97 6.47,15.69 7.47,13.72 9.51,14.22 10.41,13.07 9.36,11.31 11.03,9.83 12.75,11.01 14.01,10.25 13.69,8.23 15.80,7.44 16.96,9.14" fill="url(#gg1110)" stroke="#777" stroke-width="0.6" stroke-linejoin="round"/>
<circle cx="20.0" cy="21.0" r="10" fill="#a8a8a8"/>
<ellipse cx="20.0" cy="21.0" rx="7.6" ry="7.8" fill="none" stroke="#b89a80" stroke-width="0.5"/>
<ellipse cx="20.0" cy="21.0" rx="6.6" ry="6.8" fill="none" stroke="#1f8ff0" stroke-width="1.9"/>
<circle cx="20.0" cy="21.0" r="4.8" fill="url(#gc1110)"/>
<circle cx="20.8" cy="20.4" r="1.3" fill="#fff"/>
<path d="M17.0 18.8 A3 3 0 0 1 19.0 17.4" stroke="#222" stroke-width="1.2" fill="none"/>
</svg>
<svg class="a" style="left:40px;top:825px" width="34" height="29" viewBox="0 0 34 29">
<rect x="0.5" y="0.5" width="29" height="27.5" fill="#fff" stroke="#607890"/>
<rect x="1" y="1" width="28" height="3" fill="#86aef2"/>
<path d="M0.5 3.8H29.5" stroke="#4a7ad6" stroke-width="0.8"/>
<rect x="1" y="4.2" width="6.5" height="23.4" fill="#c4d8fa"/>
<path d="M7.8 4.2V28" stroke="#7888a0" stroke-width="0.8"/>
<g stroke="#3d6fd4" stroke-width="1"><path d="M10 7.5H27M10 9.5H27M10 13.5H27M10 15.5H27M10 17.5H27M10 19.5H27M10 21.5H27M10 23.5H27"/></g>
<path d="M16.5 21.5 L27.5 10 L31 13.2 L20 24.5 L16 25.5 Z" fill="#f5c21a" stroke="#a06a10" stroke-width="0.6"/>
<path d="M17.8 20.2 L28.4 9.2" stroke="#ffe680" stroke-width="1.2"/>
<path d="M16.5 21.5 L20 24.5 L16 25.5 Z" fill="#e8c090"/>
<path d="M15.8 25.8 L16.4 23.6 L18 25 Z" fill="#333"/>
<path d="M27.5 10 L29 8.5 L32.4 11.7 L31 13.2 Z" fill="#a0a0a0"/>
<path d="M29 8.5 L30.6 6.8 Q31.6 6 32.6 7 L33.6 8 Q34 9.2 33.2 10 L32.4 11.7 Z" fill="#e46a8a"/>
</svg>
<svg class="a" style="left:138px;top:820px" width="34" height="32" viewBox="0 0 34 32">
<path d="M10 10.5 L16.6 19" stroke="#6e6e6e" stroke-width="7" stroke-linecap="round"/>
<path d="M24 10.5 L17.4 19" stroke="#6e6e6e" stroke-width="7" stroke-linecap="round"/>
<path d="M10 10.5 L16.6 19" stroke="#e4e4e4" stroke-width="4.6" stroke-linecap="round"/>
<path d="M24 10.5 L17.4 19" stroke="#f0f0f0" stroke-width="4.6" stroke-linecap="round"/>
<circle cx="12.6" cy="23" r="4.5" fill="#c01818"/>
<circle cx="20.8" cy="23" r="4.5" fill="#c01818"/>
<circle cx="12.6" cy="23" r="3.1" fill="#f06a22"/>
<circle cx="20.8" cy="23" r="3.1" fill="#f06a22"/>
<circle cx="12.6" cy="23" r="1.5" fill="#fff"/>
<circle cx="20.8" cy="23" r="1.5" fill="#fff"/>
</svg>
<svg class="a" style="left:913px;top:825px" width="24" height="24" viewBox="0 0 24 24">
<defs><linearGradient id="xg" x1="0" y1="0" x2="1" y2="1"><stop offset="0" stop-color="#8ab88a"/><stop offset="0.6" stop-color="#3f7a3f"/><stop offset="1" stop-color="#062806"/></linearGradient></defs>
<rect x="0" y="0" width="24" height="24" fill="#fff"/>
<rect x="2" y="2" width="21" height="21" fill="url(#xg)"/>
<rect x="4" y="4" width="16" height="16" fill="#eef8ee"/>
<path d="M4.5 6 L9 6 L17.5 16.5 L13 16.5 Z" fill="#3f9a3f"/>
<path d="M13.5 6 L18 6 L11 13.5 L8.5 12 Z" fill="#5ab05a"/>
<path d="M4 15.5 H19 V17.5 H4 Z" fill="#1f5a1f" opacity="0.85"/>
</svg>
</body></html>
